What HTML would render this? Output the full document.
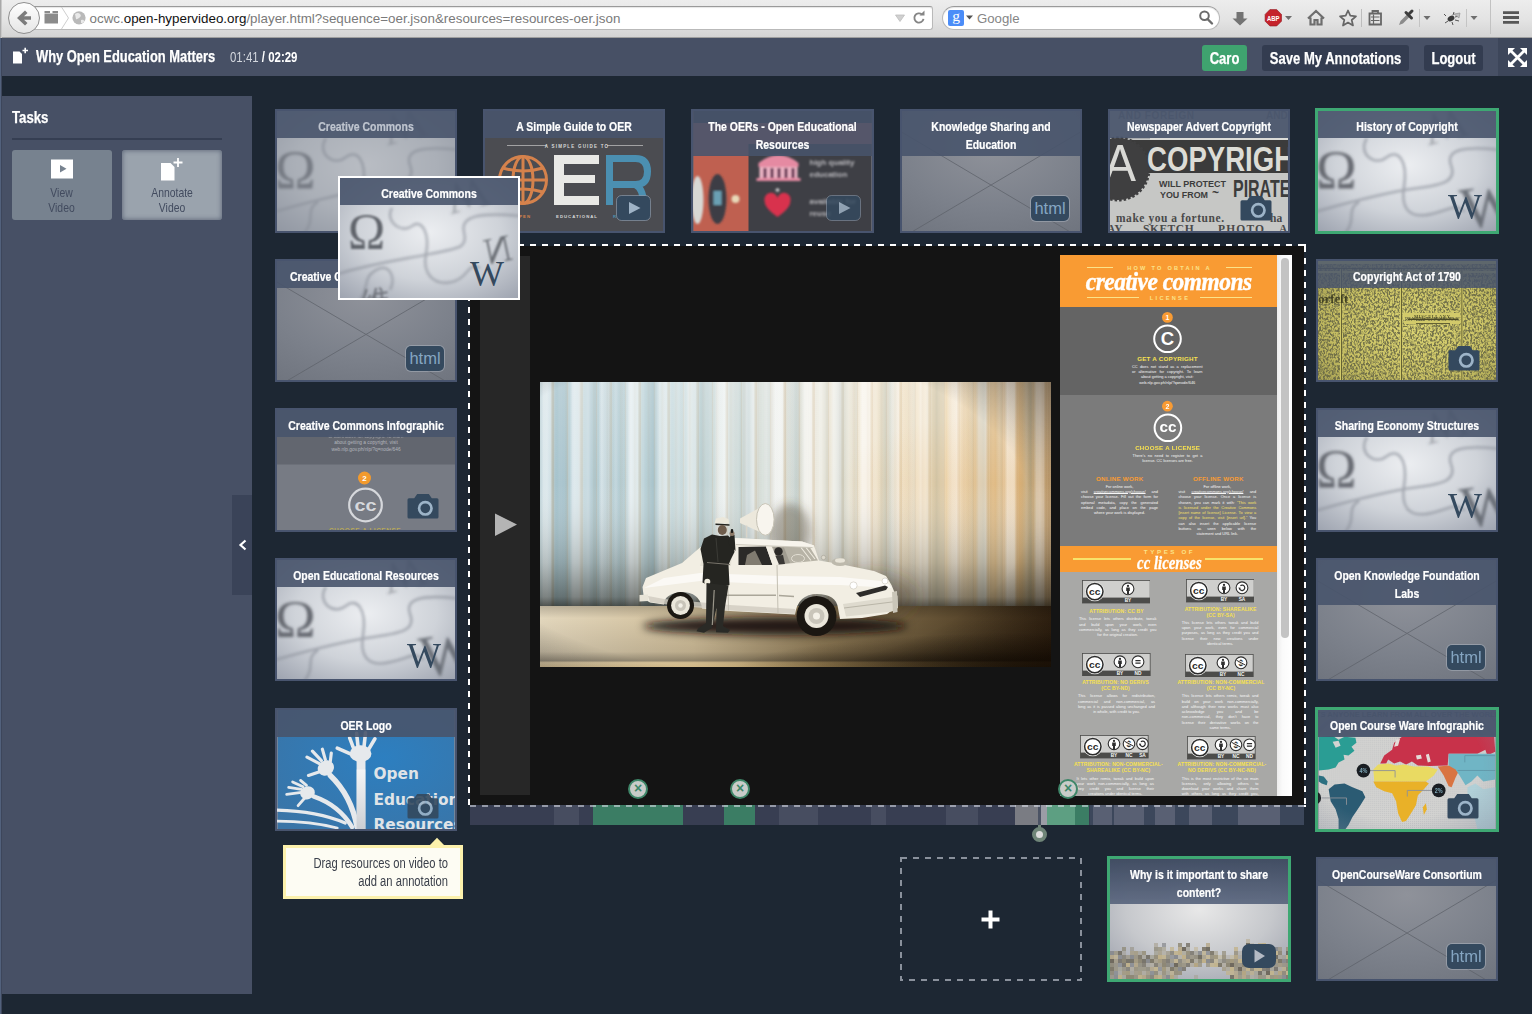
<!DOCTYPE html>
<html lang="en">
<head>
<meta charset="utf-8">
<title>Why Open Education Matters</title>
<style>
*{box-sizing:border-box;margin:0;padding:0}
html,body{width:1532px;height:1014px;overflow:hidden}
body{background:#1d2733;font-family:"Liberation Sans",sans-serif;position:relative;color:#fff}
.abs{position:absolute}
svg{display:block}
/* condensed text helper */
.cx{display:inline-block;transform:scaleX(.8);transform-origin:0 50%;white-space:nowrap}
.cc{transform-origin:50% 50%}
/* ---------- browser chrome ---------- */
#chrome{position:absolute;left:0;top:0;width:1532px;height:38px;background:linear-gradient(#ededed,#e3e3e3 55%,#d4d4d4);border-bottom:1px solid #9f9f9f}
#edge{position:absolute;left:0;top:0;width:2px;height:1014px;background:linear-gradient(90deg,#52617c 0 1px,#3d465b 1px 2px);z-index:50}
#edge:before{content:"";position:absolute;left:0;top:0;width:2px;height:38px;background:linear-gradient(90deg,#a9a9a9 0 1px,#c9c9c9 1px 2px)}
.field{position:absolute;top:6px;height:24px;background:#fff;border:1px solid #b9b9b9;border-top-color:#9a9a9a;box-shadow:inset 0 1px 1px rgba(0,0,0,.10)}
#url{left:22px;width:911px;border-radius:3px}
#search{left:942px;width:278px;border-radius:12px}
#back{position:absolute;left:8px;top:2px;width:32px;height:32px;border-radius:50%;background:linear-gradient(#fefefe,#e6e6e6);border:1px solid #8f8f8f}

.urltxt{position:absolute;left:89.5px;top:11px;font-size:13.38px;line-height:16px;color:#7a7a7a;white-space:nowrap}
.urltxt b{font-weight:normal;color:#111}
/* ---------- app header ---------- */
#hdr{position:absolute;left:0;top:38px;width:1532px;height:38px;background:#475065}
#hdr .title{-webkit-text-stroke:.25px #fff;position:absolute;left:36px;top:9px;font-size:16px;line-height:20px;font-weight:bold;color:#fff}
#hdr .time{position:absolute;left:230px;top:10px;font-size:14.3px;line-height:18px;color:#fff}
.btn{-webkit-text-stroke:.25px #fff;position:absolute;top:7px;height:26px;border-radius:3px;background:#333c50;color:#fff;font-weight:bold;font-size:16.5px;line-height:26px;text-align:center;white-space:nowrap}
.btn .cx{position:absolute;left:-50px;right:-50px;top:0;transform-origin:50% 50%;transform:scaleX(.79)}
/* ---------- sidebar ---------- */
#side{position:absolute;left:0;top:96px;width:252px;height:898px;background:#475065}
#side h2{-webkit-text-stroke:.25px #fff;position:absolute;left:12px;top:11px;font-size:16.5px;line-height:20px;color:#fff;font-weight:bold}
#side .rule{position:absolute;left:12px;top:42px;width:210px;height:2px;background:#353e52}
.task{position:absolute;top:54px;width:100px;height:70px;border-radius:3px;background:#77828f;color:#424b5f;font-size:13px;line-height:15px;text-align:center}
.task.on{background:#9aa3ad;box-shadow:inset 0 0 4px 1px rgba(70,80,100,.6)}
.task .lbl{position:absolute;left:0;top:35px;width:100%;text-align:center}
.task .lbl .cx{transform-origin:50% 50%;white-space:normal}
#handle{position:absolute;left:232px;top:495px;width:20px;height:100px;background:#3a4358;z-index:3}
/* ---------- thumbnails ---------- */
.th{position:absolute;width:182px;height:124px;border:2px solid #48546e;overflow:hidden;background:#868b96}
.th.sel{border:3px solid #3ea873;width:184px;height:126px;margin:-1px 0 0 -1px}
.th .img{position:absolute;left:0;top:0;right:0;bottom:0;overflow:hidden}
.th .img svg{width:100%;height:100%}
.th .tt{-webkit-text-stroke:.22px currentColor;position:absolute;left:0;top:0;width:124.07%;padding:7px 0 2px;background:rgba(72,84,108,.90);color:#fff;font-weight:bold;font-size:13px;line-height:18px;text-align:center;transform:scaleX(.806);transform-origin:0 0}
.th .ic{position:absolute;right:11px;top:84.5px;width:38px;height:25px;border-radius:5px;background:#34495e;box-shadow:0 0 0 1px rgba(200,210,220,.35);color:#86a6c2;font-size:16.5px;line-height:24px;text-align:center}

.th .wk{position:absolute;right:14px;top:81px;font-family:"Liberation Serif",serif;font-size:36px;line-height:30px;color:#34495e}

.ph{background:radial-gradient(ellipse at 50% 35%,#8f949e 0%,#7b818c 70%,#727884 100%)}
#tl i{position:absolute;top:0;height:20px;display:block}
.xb{position:absolute;width:20px;height:20px;border-radius:50%;background:#c9ccc9;border:2px solid #3f8769;color:#3f8769;font-weight:bold;font-size:14px;line-height:15.5px;text-align:center;z-index:8}
/* infographic text */
.tx{position:absolute;font-size:3.9px;line-height:5.25px;height:5.25px;color:#f6f6f6;white-space:nowrap;overflow:visible}
.tx u{text-decoration-thickness:.35px;text-underline-offset:.4px}
.hd{position:absolute;text-align:center;font-weight:bold;line-height:8px;height:8px;white-space:nowrap}
</style>
</head>
<body>
<!-- shared svg defs -->
<svg width="0" height="0" style="position:absolute">
  <defs>
    <radialGradient id="wg" cx=".5" cy=".45" r=".8"><stop offset="0" stop-color="#eceef1"/><stop offset=".5" stop-color="#cfd3d9"/><stop offset="1" stop-color="#969ca9"/></radialGradient>
    <filter id="bl" x="-20%" y="-20%" width="140%" height="140%"><feGaussianBlur stdDeviation="1.8"/></filter>
    <filter id="bl1" x="-20%" y="-20%" width="140%" height="140%"><feGaussianBlur stdDeviation=".8"/></filter>
    <filter id="bl05" x="-5%" y="-5%" width="110%" height="110%"><feGaussianBlur stdDeviation=".7"/></filter>
    <filter id="bl3" x="-20%" y="-20%" width="140%" height="140%"><feGaussianBlur stdDeviation="3"/></filter>
  </defs>
</svg>
<div id="edge"></div>
<!-- ================= BROWSER CHROME ================= -->
<div id="chrome">
  <div class="field" id="url"></div>
  <div id="back"></div>
  <div class="urltxt">ocwc.<b>open-hypervideo.org</b>/player.html?sequence=oer.json&amp;resources=resources-oer.json</div>
  <div class="field" id="search"></div>
  <div class="abs" style="left:977px;top:10.5px;font-size:13.2px;line-height:16px;color:#858585">Google</div>
  <svg class="abs" style="left:0;top:0" width="1532" height="38" viewBox="0 0 1532 38">
    <!-- back arrow -->
    <path d="M17 18L25 10.500L27.500 13L24 16.200H31V19.800H24L27.500 23L25 25.500z" fill="#7c7c7c"/>
    <!-- tab-groups icon -->
    <path d="M44.500 11h5.500v2h2.500v-2h5.500v2.500h-13.500zM44.500 14h13.500v9.500h-13.500z" fill="#8b8b8b"/>
    <path d="M61.500 7L68.500 18L61.500 29" fill="none" stroke="#cfcfcf" stroke-width="1"/>
    <!-- globe -->
    <circle cx="79" cy="17.800" r="6.600" fill="#b9b9b9"/><path d="M75 14q3-2 5 0t-1 4t-3 1zM81 20q3-1 3 1t-3 2z" fill="#e9e9e9"/>
    <!-- url dropdown + reload -->
    <path d="M895.500 15h9l-4.500 6.500z" fill="#d0d0d0" stroke="#bdbdbd" stroke-width=".8"/>
    <path d="M922 14.500a4.600 4.600 0 1 0 1.500 4.300" fill="none" stroke="#858585" stroke-width="1.900"/><path d="M919.500 15.500h5v-5z" fill="#858585"/>
    <!-- google icon -->
    <rect x="948" y="10" width="16" height="16" rx="2" fill="#4b8df8"/><text x="956" y="21" font-size="15.500" fill="#fff" text-anchor="middle" font-family="Liberation Serif,serif">g</text>
    <path d="M966 15.500h7l-3.500 4z" fill="#555"/>
    <!-- magnifier -->
    <circle cx="1204.500" cy="15.800" r="4.300" fill="none" stroke="#6b6b6b" stroke-width="2"/><path d="M1207.500 19L1212 23.500" stroke="#6b6b6b" stroke-width="2.400" stroke-linecap="round"/>
    <!-- download -->
    <path d="M1236.500 12h7v6.500h4l-7.500 7l-7.500-7h4z" fill="#737373"/>
    <!-- ABP -->
    <path d="M1269.900 9.600h6.800l4.800 4.800v6.800l-4.800 4.800h-6.800l-4.800-4.800v-6.800z" fill="#c5232b" stroke="#8e1a20" stroke-width=".6"/><text x="1273.300" y="20.600" font-size="7" font-weight="bold" fill="#fff" text-anchor="middle" font-family="Liberation Sans,sans-serif" textLength="12.500" lengthAdjust="spacingAndGlyphs">ABP</text>
    <path d="M1285 16h7l-3.500 4z" fill="#6e6e6e"/>
    <!-- home -->
    <path d="M1308 18.500L1316 11L1324 18.500M1310.500 17.500V24.500H1314.500V20H1317.500V24.500H1321.500V17.500" fill="none" stroke="#6e6e6e" stroke-width="2.200"/>
    <!-- star -->
    <path d="M1348 10.500L1350.300 15.700L1356 16.300L1351.700 20L1353 25.500L1348 22.600L1343 25.500L1344.300 20L1340 16.300L1345.700 15.700z" fill="none" stroke="#666" stroke-width="1.700" stroke-linejoin="round"/>
    <path d="M1361.500 9V27" stroke="#bdbdbd"/>
    <!-- list/clipboard -->
    <path d="M1369.500 13.500h11.500v11h-11.500zM1372.500 13.500v-2.500h5.500v2.500" fill="none" stroke="#666" stroke-width="1.800"/><path d="M1371 17h8.500M1371 20.500h8.500M1373.500 14.500v9.500" stroke="#666" stroke-width="1.200"/>
    <!-- eyedropper -->
    <path d="M1399 25L1400.500 21L1407 14.500L1409.500 17L1403 23.500z" fill="#8b8b8b"/><path d="M1406 12.500L1411.500 18M1408.500 14.500L1412 11" stroke="#3c3c3c" stroke-width="3" stroke-linecap="round"/>
    <path d="M1419.500 9V27" stroke="#c4c4c4"/><path d="M1423.500 16h7l-3.500 4z" fill="#6e6e6e"/>
    <!-- bug -->
    <ellipse cx="1451" cy="18.500" rx="3.600" ry="2.600" fill="#3a3a3a" transform="rotate(-30 1451 18.500)"/><path d="M1446 16l-2-2M1448 21l-3 2M1453 15l1-3M1455 17l4-1M1455 20l4 1M1452 22l1 3" stroke="#555" stroke-width="1"/><path d="M1454 14l6-1l-1 5z" fill="#bdbdbd" stroke="#8a8a8a" stroke-width=".6"/>
    <path d="M1466.500 9V27" stroke="#c4c4c4"/><path d="M1470.500 16h7l-3.500 4z" fill="#6e6e6e"/>
    <path d="M1490.500 0V34" stroke="#c2c2c2"/>
    <!-- hamburger -->
    <path d="M1503 12.700h16M1503 17.500h16M1503 22.300h16" stroke="#575757" stroke-width="2.800"/>
  </svg>
</div>
<!-- ================= APP HEADER ================= -->
<div id="hdr">
  <svg class="abs" style="left:12px;top:9px" width="18" height="18" viewBox="0 0 18 18"><path d="M1 4.500h6.500l2.500 2.500v9.500h-9z" fill="#fff"/><path d="M10.500 3.500h5.500M13.200 .8v5.500" stroke="#fff" stroke-width="1.600"/></svg>
  <div class="abs" style="left:1498px;top:0;width:34px;height:38px;background:#3d465a"></div><svg class="abs" style="left:1507.5px;top:10px" width="19" height="19" viewBox="0 0 19 19"><path d="M3 3L16 16M16 3L3 16" stroke="#fff" stroke-width="2.800"/><g fill="#fff"><path d="M0 0h7L0 7z"/><path d="M19 0v7L12 0z"/><path d="M0 19v-7L7 19z"/><path d="M19 19h-7L19 12z"/></g></svg>
  <div class="title"><span class="cx" style="transform:scaleX(.806)">Why Open Education Matters</span></div>
  <div class="time"><span class="cx"><span style="color:#d3d7de">01:41</span> <b>/ 02:29</b></span></div>
  <div class="btn" style="left:1202px;width:45px;background:#3fa36f"><span class="cx">Caro</span></div>
  <div class="btn" style="left:1262px;width:147px"><span class="cx">Save My Annotations</span></div>
  <div class="btn" style="left:1424px;width:59px"><span class="cx">Logout</span></div>
</div>
<!-- ================= SIDEBAR ================= -->
<div id="side">
  <h2><span class="cx">Tasks</span></h2>
  <div class="rule"></div>
  <div class="task" style="left:12px"><svg class="abs" style="left:39px;top:9px" width="22" height="20"><path d="M0 .5h22v19h-22zM9 6v7.500l6.500-3.750z" fill="#fff" fill-rule="evenodd"/></svg><div class="lbl"><span class="cx">View<br>Video</span></div></div>
  <div class="task on" style="left:122px"><svg class="abs" style="left:39px;top:7px" width="24" height="24" viewBox="0 0 24 24"><path d="M0 6h9.500l4 4v13.500h-13.500z" fill="#fff"/><path d="M12.500 5.500h9M17 1v9" stroke="#fff" stroke-width="1.800"/></svg><div class="lbl"><span class="cx">Annotate<br>Video</span></div></div>
</div>
<div id="handle"><svg class="abs" style="left:6px;top:44px" width="9" height="12"><path d="M7.500 1.500L2.500 6L7.500 10.500" fill="none" stroke="#fff" stroke-width="2.200"/></svg></div>
<svg width="0" height="0" style="position:absolute"><defs>
  <radialGradient id="pg" cx=".5" cy=".3" r=".85"><stop offset="0" stop-color="#8f929a"/><stop offset=".6" stop-color="#7c818b"/><stop offset="1" stop-color="#70757f"/></radialGradient>
  <radialGradient id="cg" cx=".5" cy=".42" r=".75"><stop offset="0" stop-color="#e8e8e8"/><stop offset=".55" stop-color="#c6c8cc"/><stop offset="1" stop-color="#9a9eaa"/></radialGradient>
</defs></svg>
<!-- ================= THUMBNAILS ================= -->
<div id="thumbs">
  <!-- row 1 -->
  <div class="th" style="left:275px;top:109px"><div class="img" style="opacity:.5"><svg viewBox="0 0 182 124" preserveAspectRatio="none"><rect width="182" height="124" fill="url(#wg)"/><g filter="url(#bl)" fill="none" stroke="#8a8f99" stroke-width="2.400" opacity=".7"><path d="M50 28C40 44 58 58 70 48S92 52 88 78S96 112 118 106S140 96 150 104"/><path d="M-2 104C40 92 70 84 100 80S142 72 136 56S150 36 184 40"/><path d="M28 126C40 112 28 102 42 94"/></g><g filter="url(#bl)" fill="#5f636b" font-family="Liberation Serif,serif"><text x="-2" y="80" font-size="56" opacity=".95">Ω</text><text x="146" y="120" font-size="62" opacity=".85" transform="rotate(-8 165 100)">W</text><text x="96" y="2" font-size="46" opacity=".45" transform="rotate(165 122 2)">W</text></g></svg></div><div class="tt" style="color:#bfc5cf">Creative Commons</div></div>

  <div class="th" style="left:483px;top:109px"><div class="img">
    <svg viewBox="0 0 178 120"><rect width="178" height="120" fill="#4b4c51"/>
      <g stroke="#b9b9b9" stroke-width=".8"><line x1="22" y1="34.5" x2="62" y2="34.5"/><line x1="122" y1="34.5" x2="158" y2="34.5"/></g>
      <text x="92" y="36.5" font-size="4.5" font-weight="bold" fill="#d8d8d8" text-anchor="middle" letter-spacing="1.2" font-family="Liberation Sans,sans-serif">A SIMPLE GUIDE TO</text>
      <g fill="none" stroke="#d5824c" stroke-width="3"><circle cx="38" cy="69" r="23.5"/><ellipse cx="38" cy="69" rx="10" ry="23.5"/><line x1="38" y1="45" x2="38" y2="93"/><line x1="14" y1="69" x2="62" y2="69"/><path d="M18 57Q38 63 58 57M18 81Q38 75 58 81"/></g>
      <path d="M69 44h45v9H79v11h31v8H79v13h35v9H69z" fill="#e9e9e6"/>
      <path d="M124.500 94V47.500h26q12 0 12 13t-12 13h-26M150 73.500q8 3 9 20.500" fill="none" stroke="#4b8fb1" stroke-width="7"/>
      <text x="38" y="106.500" font-size="4.300" font-weight="bold" fill="#d5824c" text-anchor="middle" letter-spacing="1" font-family="Liberation Sans,sans-serif">OPEN</text>
      <text x="92" y="106.500" font-size="4.300" font-weight="bold" fill="#d8d8d8" text-anchor="middle" letter-spacing="1" font-family="Liberation Sans,sans-serif">EDUCATIONAL</text>
      <text x="146" y="106.500" font-size="4.300" font-weight="bold" fill="#4b8fb1" text-anchor="middle" letter-spacing="1" font-family="Liberation Sans,sans-serif">RESOURCES</text>
    </svg></div><div class="tt">A Simple Guide to OER</div><div class="abs" style="left:131px;top:84px"><svg viewBox="0 0 35 27" width="35" height="27"><rect x=".5" y=".5" width="34" height="25" rx="5" fill="#34495e" stroke="rgba(200,210,225,.4)"/><path d="M13 7L24.500 13L13 19z" fill="#9fb3c6"/></svg></div></div>

  <div class="th" style="left:691px;top:109px;width:183px"><div class="img">
    <svg viewBox="0 0 178 120"><rect width="178" height="120" fill="#3e3f45"/><rect width="55" height="120" fill="#bf6050"/><rect y="12" width="178" height="32" fill="#c86a5c"/><rect width="178" height="12" fill="#30343c"/><rect x="55" y="33" width="123" height="12" fill="#32343a"/>
      <g filter="url(#bl1)"><ellipse cx="4" cy="89" rx="6" ry="24" fill="#d8d8d4"/><ellipse cx="24" cy="88" rx="9" ry="25" fill="#3d3d45"/><rect x="20" y="80" width="8" height="14" fill="#6aa0b4"/><circle cx="42" cy="88" r="4" fill="#e8d8b8"/>
      <path d="M65 52q20-16 40 0v4H65z" fill="#e58aa2"/><rect x="66" y="56" width="38" height="12" fill="#f0b8c8"/><g fill="#5a2848"><rect x="70" y="57" width="3" height="10"/><rect x="77" y="57" width="3" height="10"/><rect x="84" y="57" width="3" height="10"/><rect x="91" y="57" width="3" height="10"/><rect x="98" y="57" width="3" height="10"/></g><rect x="63" y="67" width="44" height="3" fill="#e58aa2"/>
      <path d="M82 79h4M84 77v4" stroke="#ddd" stroke-width="1.300"/>
      <path d="M84 106q-13-9-13-16a6.500 6.500 0 0 1 13-3a6.500 6.500 0 0 1 13 3q0 7-13 16z" fill="#d8334e"/></g>
      <g filter="url(#bl1)" fill="#b9b9bd" font-size="8" font-family="Liberation Sans,sans-serif" font-weight="bold"><text x="116" y="54">high quality</text><text x="116" y="66">education</text><text x="116" y="93">available for</text><text x="116" y="105">reuse</text></g>
      
    </svg></div><div class="tt">The OERs - Open Educational<br>Resources</div><div class="abs" style="left:133px;top:84px;opacity:.85"><svg viewBox="0 0 35 27" width="35" height="27"><rect x=".5" y=".5" width="34" height="25" rx="5" fill="#34495e" stroke="rgba(200,210,225,.4)"/><path d="M13 7L24.500 13L13 19z" fill="#9fb3c6"/></svg></div></div>

  <div class="th" style="left:900px;top:109px"><div class="img"><svg viewBox="0 0 182 124" preserveAspectRatio="none"><defs></defs><rect width="182" height="124" fill="url(#pg)"/><g stroke="#5f636b" stroke-width="1" opacity=".8"><line x1="0" y1="22" x2="182" y2="131"/><line x1="182" y1="22" x2="0" y2="131"/></g></svg></div><div class="tt">Knowledge Sharing and<br>Education</div><div class="ic">html</div></div>

  <div class="th" style="left:1108px;top:109px"><div class="img">
    <svg viewBox="0 0 178 120"><rect width="178" height="120" fill="#c6c7c5"/>
      <rect y="0" width="178" height="28" fill="#a9acae"/>
      <g font-family="Liberation Sans,sans-serif" font-weight="bold" fill="#6c7078" font-size="10"><text x="8" y="8" textLength="76">AND FOREIGN</text><text x="156" y="8">AND</text></g>
      <rect y="29" width="178" height="33" fill="#3b3b3b"/>
      <circle cx="8" cy="58" r="31" fill="#3f3f40" stroke="#3f3f40" stroke-width="3" stroke-dasharray="2.500 2"/>
      <rect x="40" y="27" width="138" height="2" fill="#dcdcd8"/>
      <text x="-6" y="70" font-size="52" fill="#d9d9d5" font-family="Liberation Sans,sans-serif" textLength="32" lengthAdjust="spacingAndGlyphs">A</text>
      <text x="37" y="59.500" font-size="35" font-weight="bold" fill="#dcdcd6" font-family="Liberation Sans,sans-serif" textLength="164" lengthAdjust="spacingAndGlyphs">COPYRIGHT</text>
      <g font-family="Liberation Sans,sans-serif" font-weight="bold" fill="#3c3c3c"><text x="49" y="76" font-size="9.500" textLength="67" lengthAdjust="spacingAndGlyphs">WILL PROTECT</text><text x="50" y="87" font-size="9.500" textLength="48" lengthAdjust="spacingAndGlyphs">YOU FROM</text><text x="102" y="86" font-size="12">~</text><text x="123" y="86" font-size="23" textLength="68" lengthAdjust="spacingAndGlyphs">PIRATES</text></g>
      <g font-family="Liberation Serif,serif" font-weight="bold" fill="#4a4a4a"><text x="6" y="111" font-size="11.500" textLength="108">make you a fortune.</text><text x="160" y="111" font-size="11.500">ha</text><text x="-3" y="122" font-size="11.500">AY.</text><text x="33" y="122" font-size="11.500" textLength="54">SKETCH.</text><text x="108" y="122" font-size="11.500" textLength="50">PHOTO.</text><text x="169" y="122" font-size="11.500">A</text></g>
    </svg></div><div class="tt">Newspaper Advert Copyright</div><div class="abs" style="left:130px;top:85px"><svg viewBox="0 0 32 25" width="32" height="25"><path d="M2 4.200h5.200l3-4.200h11.600l3 4.200h5.200a1.500 1.500 0 0 1 1.500 1.500v17.300a1.500 1.500 0 0 1-1.500 1.500h-28a1.500 1.500 0 0 1-1.500-1.500v-17.300a1.500 1.500 0 0 1 1.500-1.500z" fill="#34495e"/><circle cx="18.300" cy="14.300" r="6.200" fill="none" stroke="#9db4c8" stroke-width="2.700"/></svg></div></div>

  <div class="th sel" style="left:1316px;top:109px"><div class="img"><svg viewBox="0 0 182 124" preserveAspectRatio="none"><rect width="182" height="124" fill="url(#wg)"/><g filter="url(#bl)" fill="none" stroke="#8a8f99" stroke-width="2.400" opacity=".7"><path d="M50 28C40 44 58 58 70 48S92 52 88 78S96 112 118 106S140 96 150 104"/><path d="M-2 104C40 92 70 84 100 80S142 72 136 56S150 36 184 40"/><path d="M28 126C40 112 28 102 42 94"/></g><g filter="url(#bl)" fill="#5f636b" font-family="Liberation Serif,serif"><text x="-2" y="80" font-size="56" opacity=".95">Ω</text><text x="146" y="120" font-size="62" opacity=".85" transform="rotate(-8 165 100)">W</text><text x="96" y="2" font-size="46" opacity=".45" transform="rotate(165 122 2)">W</text></g></svg></div><div class="tt">History of Copyright</div><div class="wk">W</div></div>

  <!-- left column -->
  <div class="th" style="left:275px;top:259px;height:123px"><div class="img"><svg viewBox="0 0 182 124" preserveAspectRatio="none"><defs></defs><rect width="182" height="124" fill="url(#pg)"/><g stroke="#5f636b" stroke-width="1" opacity=".8"><line x1="0" y1="22" x2="182" y2="131"/><line x1="182" y1="22" x2="0" y2="131"/></g></svg></div><div class="tt">Creative Commons Homepage</div><div class="ic">html</div></div>

  <div class="th" style="left:275px;top:408px"><div class="img">
    <svg viewBox="0 0 178 120"><rect width="178" height="120" fill="#777b84"/><rect width="178" height="54.500" fill="#62666f"/>
      <g font-family="Liberation Sans,sans-serif" fill="#b4b7be" font-size="4.800" text-anchor="middle"><text x="89" y="28" opacity=".7">or alternative for copyright. To learn</text><text x="89" y="34.300">about getting a copyright, visit</text><text x="89" y="40.600">web.nlp.gov.ph/nlp/?q=node/646</text></g>
      <circle cx="87.500" cy="68" r="6.500" fill="#f39a2c"/><text x="87.500" y="71" font-size="8" font-weight="bold" fill="#fff" text-anchor="middle" font-family="Liberation Sans,sans-serif">2</text>
      <circle cx="88.500" cy="95" r="16.300" fill="none" stroke="#d6d8dc" stroke-width="2.200"/><text x="88.500" y="101" font-size="16" font-weight="bold" fill="#d6d8dc" text-anchor="middle" font-family="Liberation Sans,sans-serif" textLength="22" lengthAdjust="spacingAndGlyphs">cc</text>
      <text x="88" y="123" font-size="6.500" font-weight="bold" fill="#b8a857" text-anchor="middle" font-family="Liberation Sans,sans-serif" letter-spacing=".5">CHOOSE A LICENSE</text>
    </svg></div><div class="tt">Creative Commons Infographic</div><div class="abs" style="left:130px;top:84px"><svg viewBox="0 0 32 25" width="32" height="25"><path d="M2 4.200h5.200l3-4.200h11.600l3 4.200h5.200a1.500 1.500 0 0 1 1.500 1.500v17.300a1.500 1.500 0 0 1-1.500 1.500h-28a1.500 1.500 0 0 1-1.500-1.500v-17.300a1.500 1.500 0 0 1 1.500-1.500z" fill="#34495e"/><circle cx="18.300" cy="14.300" r="6.200" fill="none" stroke="#9db4c8" stroke-width="2.700"/></svg></div></div>

  <div class="th" style="left:275px;top:558px;height:123px"><div class="img"><svg viewBox="0 0 182 124" preserveAspectRatio="none"><rect width="182" height="124" fill="url(#wg)"/><g filter="url(#bl)" fill="none" stroke="#8a8f99" stroke-width="2.400" opacity=".7"><path d="M50 28C40 44 58 58 70 48S92 52 88 78S96 112 118 106S140 96 150 104"/><path d="M-2 104C40 92 70 84 100 80S142 72 136 56S150 36 184 40"/><path d="M28 126C40 112 28 102 42 94"/></g><g filter="url(#bl)" fill="#5f636b" font-family="Liberation Serif,serif"><text x="-2" y="80" font-size="56" opacity=".95">Ω</text><text x="146" y="120" font-size="62" opacity=".85" transform="rotate(-8 165 100)">W</text><text x="96" y="2" font-size="46" opacity=".45" transform="rotate(165 122 2)">W</text></g></svg></div><div class="tt">Open Educational Resources</div><div class="wk">W</div></div>

  <div class="th" style="left:275px;top:708px;height:123px"><div class="img">
    <svg viewBox="0 0 178 120"><defs><radialGradient id="og" cx=".6" cy=".4" r=".8"><stop offset="0" stop-color="#2d7fc0"/><stop offset="1" stop-color="#3a74a6"/></radialGradient><linearGradient id="otr" x1="0" x2="0" y1="0" y2="1"><stop offset="0" stop-color="#fff" stop-opacity=".5"/><stop offset="1" stop-color="#b8bcc2" stop-opacity=".6"/></linearGradient></defs><rect width="178" height="120" fill="url(#og)"/>
      <g fill="none" stroke="#e6e9ec" stroke-linecap="round" stroke-linejoin="round">
        <path d="M84 122V48" stroke-width="9"/>
        <path d="M80 118Q74 86 53 66" stroke-width="5.500"/><path d="M75 118Q62 96 36 87" stroke-width="4.500"/>
        <path d="M68 114Q40 102 -2 101" stroke-width="3.200"/><path d="M60 119Q34 112 -2 112" stroke-width="2.800"/>
        <g stroke-width="3.600"><path d="M77 40L72.500 28M81 37L79.500 23.500M87 37L88.500 23M91.500 40L98 29M75 45L60 38.500"/></g>
        <g stroke-width="3.200"><path d="M42 54L29.500 47.500M44 51L35 41.500M48 50L45 39.500M53 52L54 43.500M43 62L31 66"/></g>
        <g stroke-width="2.800"><path d="M24 83L9 85M24 80L11 78M25.500 77.500L15 72.500M29 76L23 71M27 89L20.500 96.500"/></g>
      </g>
      <g fill="#e6e9ec"><ellipse cx="83.500" cy="44" rx="11" ry="8.500"/><ellipse cx="48.500" cy="58.500" rx="8.500" ry="7.500" transform="rotate(-35 48.500 58.500)"/><ellipse cx="30" cy="83.500" rx="7.500" ry="6.500" transform="rotate(-20 30 83.500)"/></g>
      <rect x="79.500" y="60" width="9" height="60" fill="url(#otr)"/>
      <g font-family="DejaVu Sans,sans-serif" font-weight="bold" fill="#dfe3e7" font-size="15.500"><text x="96.500" y="70">Open</text><text x="96.500" y="95.500">Education</text><text x="96.500" y="121">Resources</text></g>
    </svg></div><div class="tt">OER Logo</div><div class="abs" style="left:130px;top:83.5px;opacity:.9"><svg viewBox="0 0 32 25" width="32" height="25"><path d="M2 4.200h5.200l3-4.200h11.600l3 4.200h5.200a1.500 1.500 0 0 1 1.500 1.500v17.300a1.500 1.500 0 0 1-1.500 1.500h-28a1.500 1.500 0 0 1-1.500-1.500v-17.300a1.500 1.500 0 0 1 1.500-1.500z" fill="#34495e"/><circle cx="18.300" cy="14.300" r="6.200" fill="none" stroke="#9db4c8" stroke-width="2.700"/></svg></div></div>

  <!-- right column -->
  <div class="th" style="left:1316px;top:259px;height:123px"><div class="img">
    <svg viewBox="0 0 178 119" preserveAspectRatio="none"><defs>
      <filter id="np" x="0" y="0" width="100%" height="100%"><feTurbulence type="fractalNoise" baseFrequency=".55 .42" numOctaves="2" seed="7" result="n"/><feColorMatrix in="n" type="matrix" values="0 0 0 0 .13  0 0 0 0 .13  0 0 0 0 .06  -3.200 -3.200 0 0 3.600"/></filter>
      <radialGradient id="ny" cx=".55" cy=".55" r=".7"><stop offset="0" stop-color="#dcd573"/><stop offset=".6" stop-color="#c9c164"/><stop offset="1" stop-color="#a9a354"/></radialGradient></defs>
      <rect width="178" height="119" fill="url(#ny)"/>
      <rect width="178" height="119" filter="url(#np)" opacity=".85"/>
      <g fill="#d2ca6a"><rect x="22" y="8" width="2.500" height="111"/><rect x="82" y="8" width="2.500" height="111"/><rect x="142.500" y="8" width="2.500" height="111"/><rect x="0" y="0" width="178" height="3"/><rect x="0" y="10" width="178" height="2"/><rect x="86" y="52" width="56" height="4"/><rect x="86" y="60" width="56" height="3"/></g>
      <g fill="#4a4926"><rect x="23" y="8" width=".8" height="111"/><rect x="83" y="8" width=".8" height="111"/><rect x="143.500" y="8" width=".8" height="111"/><rect x="0" y="7" width="178" height=".8"/><rect x="90" y="57.500" width="50" height="1.600"/><rect x="98" y="62" width="34" height=".8"/></g>
      <g font-family="Liberation Serif,serif" font-weight="bold" fill="#33331a" opacity=".8"><text x="0" y="42" font-size="13">orfeſt</text><text x="96" y="56.500" font-size="4.500" letter-spacing=".6">MISCELLANY.</text></g>
    </svg>
    </div><div class="tt" style="background:rgba(72,84,108,.84)">Copyright Act of 1790</div><div class="abs" style="left:130px;top:85px"><svg viewBox="0 0 32 25" width="32" height="25"><path d="M2 4.200h5.200l3-4.200h11.600l3 4.200h5.200a1.500 1.500 0 0 1 1.500 1.500v17.300a1.500 1.500 0 0 1-1.500 1.500h-28a1.500 1.500 0 0 1-1.500-1.500v-17.300a1.500 1.500 0 0 1 1.500-1.500z" fill="#34495e"/><circle cx="18.300" cy="14.300" r="6.200" fill="none" stroke="#9db4c8" stroke-width="2.700"/></svg></div></div>

  <div class="th" style="left:1316px;top:408px"><div class="img"><svg viewBox="0 0 182 124" preserveAspectRatio="none"><rect width="182" height="124" fill="url(#wg)"/><g filter="url(#bl)" fill="none" stroke="#8a8f99" stroke-width="2.400" opacity=".7"><path d="M50 28C40 44 58 58 70 48S92 52 88 78S96 112 118 106S140 96 150 104"/><path d="M-2 104C40 92 70 84 100 80S142 72 136 56S150 36 184 40"/><path d="M28 126C40 112 28 102 42 94"/></g><g filter="url(#bl)" fill="#5f636b" font-family="Liberation Serif,serif"><text x="-2" y="80" font-size="56" opacity=".95">Ω</text><text x="146" y="120" font-size="62" opacity=".85" transform="rotate(-8 165 100)">W</text><text x="96" y="2" font-size="46" opacity=".45" transform="rotate(165 122 2)">W</text></g></svg></div><div class="tt">Sharing Economy Structures</div><div class="wk">W</div></div>

  <div class="th" style="left:1316px;top:558px;height:123px"><div class="img"><svg viewBox="0 0 182 124" preserveAspectRatio="none"><defs></defs><rect width="182" height="124" fill="url(#pg)"/><g stroke="#5f636b" stroke-width="1" opacity=".8"><line x1="0" y1="22" x2="182" y2="131"/><line x1="182" y1="22" x2="0" y2="131"/></g></svg></div><div class="tt">Open Knowledge Foundation<br>Labs</div><div class="ic">html</div></div>

  <div class="th sel" style="left:1316px;top:708px;height:125px"><div class="img">
    <svg viewBox="0 0 178 120"><defs><pattern id="dots" width="2" height="2" patternUnits="userSpaceOnUse"><rect width="2" height="2" fill="#d3d3d1"/><rect width="1" height="1" fill="#c2c3c4"/></pattern><radialGradient id="mv" cx=".45" cy=".45" r=".8"><stop offset=".6" stop-color="#8a90a0" stop-opacity="0"/><stop offset="1" stop-color="#8a90a0" stop-opacity=".5"/></radialGradient></defs>
      <rect width="178" height="120" fill="url(#dots)"/>
      <rect width="178" height="26" fill="#9a9ca4"/>
      <text x="-3" y="7.500" font-size="6.800" font-weight="bold" fill="#4a5268" font-family="Liberation Sans,sans-serif" textLength="186" lengthAdjust="spacingAndGlyphs">TS ANYONE LEARN FROM ALL OVER THE WORLD</text>
      <path d="M0 27L14 26L20 30L26 27L37 28L38 33L33 37L36 41L30 46L25 45L26 50L20 53L17 58L10 60L0 61z" fill="#2a9d94"/><path d="M14 32L20 31L22 36L17 38z" fill="#d3d3d1"/>
      <path d="M0 66L5 67L9 72L8 76L3 74L0 72z" fill="#2b6f80"/>
      <path d="M10 80L16 75L26 74L34 78L44 82L47 88L42 96L38 102L34 108L30 116L27 120H20L20 110L17 100L12 92z" fill="#2b5b73"/>
      <path d="M62 54L66 46L74 40L76 33L84 27L96 26.500L120 26.500L150 27L177 27L178 42L170 46L168 40L160 44L150 44L131 44L130 56L112 56.500L100 56L94 52L88 55L82 52L76 54L70 50L68 54z" fill="#c8324a"/>
      <path d="M78 30L82 29L80 36L76 37zM98 46L103 45L104 49L99 50zM108 45L111 44L113 52L110 53z" fill="#e4dcd8"/>
      <path d="M55 60L60 55L70 54L78 56L86 55L96 57L110 57L120 60L116 66L108 72L56 72z" fill="#e9da62"/>
      <path d="M55 72L108 72L111 74L106 80L100 86L98 96L92 106L88 112L84 113L80 104L78 92L74 84L66 82L58 78z" fill="#e9b128"/>
      <path d="M105 98L108 94L109 100L106 106z" fill="#e9b128"/>
      <path d="M120 57L132 56L142 60L138 68L134 78L131 77L126 66z" fill="#d97442"/>
      <path d="M131 44L168 44L178 44V70L166 72L160 66L154 72L148 76L142 66L138 60L131 56z" fill="#70b5c5"/>
      <path d="M150 78L158 74L166 80L178 78V120H160L156 104L150 92z" fill="#a9d0d9" opacity=".8"/>
      <g fill="none" stroke="#8d9196" stroke-width=".9"><path d="M52 61.100H77V68M114 81.100H89.300V87.300M3 88.700H28V95.600"/><path d="M147.300 52.800V46H178M140 61H178" stroke="#5f98a8"/></g>
      <g fill="#191d22"><circle cx="45.100" cy="61.100" r="6.900"/><circle cx="121" cy="81.100" r="6.900"/><circle cx="-4.500" cy="88.700" r="6.900"/></g>
      <g font-family="Liberation Sans,sans-serif" font-size="7" font-weight="bold" fill="#7fa8b8" text-anchor="middle"><text x="45.100" y="63.600" textLength="8" lengthAdjust="spacingAndGlyphs">4%</text><text x="121" y="83.600" textLength="8" lengthAdjust="spacingAndGlyphs">2%</text></g>
      <rect width="178" height="120" fill="url(#mv)"/>
    </svg></div><div class="tt" style="background:rgba(72,84,108,.93)">Open Course Ware Infographic</div><div class="abs" style="left:129px;top:84px"><svg viewBox="0 0 32 25" width="32" height="25"><path d="M2 4.200h5.200l3-4.200h11.600l3 4.200h5.200a1.500 1.500 0 0 1 1.500 1.500v17.300a1.500 1.500 0 0 1-1.500 1.500h-28a1.500 1.500 0 0 1-1.500-1.500v-17.300a1.500 1.500 0 0 1 1.500-1.500z" fill="#34495e"/><circle cx="18.300" cy="14.300" r="6.200" fill="none" stroke="#9db4c8" stroke-width="2.700"/></svg></div></div>

  <!-- bottom row -->
  <div class="th sel" style="left:1108px;top:857px"><div class="img">
    <svg viewBox="0 0 178 120"><rect width="178" height="120" fill="url(#cg)"/>
      <g filter="url(#bl05)"><rect x="0" y="92" width="4" height="4" fill="#8a8c90" opacity="1"/><rect x="0" y="96" width="4" height="4" fill="#b4a684" opacity="0.85"/><rect x="0" y="100" width="4" height="4" fill="#6f6a5e" opacity="1"/><rect x="0" y="104" width="4" height="4" fill="#8e8876" opacity="0.85"/><rect x="0" y="108" width="4" height="4" fill="#7f7a6c" opacity="1"/><rect x="0" y="112" width="4" height="4" fill="#8e8876" opacity="0.85"/><rect x="0" y="116" width="4" height="4" fill="#9c9684" opacity="0.75"/><rect x="4" y="92" width="4" height="4" fill="#9c9684" opacity="0.85"/><rect x="4" y="96" width="4" height="4" fill="#c2b48e" opacity="0.75"/><rect x="4" y="100" width="4" height="4" fill="#a39a80" opacity="0.75"/><rect x="4" y="104" width="4" height="4" fill="#97917f" opacity="0.75"/><rect x="4" y="108" width="4" height="4" fill="#9c9684" opacity="0.85"/><rect x="4" y="112" width="4" height="4" fill="#8a8c90" opacity="0.75"/><rect x="4" y="116" width="4" height="4" fill="#8a8c90" opacity="0.95"/><rect x="8" y="92" width="4" height="4" fill="#6f6a5e" opacity="0.85"/><rect x="8" y="96" width="4" height="4" fill="#8a8c90" opacity="0.95"/><rect x="8" y="100" width="4" height="4" fill="#6f6a5e" opacity="0.75"/><rect x="8" y="104" width="4" height="4" fill="#8a8c90" opacity="0.75"/><rect x="8" y="108" width="4" height="4" fill="#a8a69c" opacity="0.95"/><rect x="8" y="112" width="4" height="4" fill="#b0aca0" opacity="0.75"/><rect x="8" y="116" width="4" height="4" fill="#bfb08a" opacity="0.95"/><rect x="12" y="88" width="4" height="4" fill="#8e8876" opacity="0.75"/><rect x="12" y="92" width="4" height="4" fill="#a8a69c" opacity="0.75"/><rect x="12" y="96" width="4" height="4" fill="#7f7a6c" opacity="0.75"/><rect x="12" y="100" width="4" height="4" fill="#8e8876" opacity="1"/><rect x="12" y="104" width="4" height="4" fill="#6f6a5e" opacity="0.75"/><rect x="12" y="108" width="4" height="4" fill="#97917f" opacity="0.75"/><rect x="12" y="112" width="4" height="4" fill="#a39a80" opacity="0.85"/><rect x="12" y="116" width="4" height="4" fill="#a8a69c" opacity="1"/><rect x="16" y="96" width="4" height="4" fill="#9c9684" opacity="0.75"/><rect x="16" y="100" width="4" height="4" fill="#6f6a5e" opacity="0.85"/><rect x="16" y="104" width="4" height="4" fill="#bfb08a" opacity="0.95"/><rect x="16" y="108" width="4" height="4" fill="#7f7a6c" opacity="0.75"/><rect x="16" y="112" width="4" height="4" fill="#a39a80" opacity="0.95"/><rect x="16" y="116" width="4" height="4" fill="#8e8876" opacity="1"/><rect x="20" y="88" width="4" height="4" fill="#8e8876" opacity="0.5"/><rect x="20" y="92" width="4" height="4" fill="#a39a80" opacity="0.75"/><rect x="20" y="96" width="4" height="4" fill="#8a8c90" opacity="1"/><rect x="20" y="100" width="4" height="4" fill="#6f6a5e" opacity="0.85"/><rect x="20" y="104" width="4" height="4" fill="#8a8c90" opacity="0.85"/><rect x="20" y="108" width="4" height="4" fill="#b0aca0" opacity="0.85"/><rect x="20" y="112" width="4" height="4" fill="#a8a69c" opacity="0.85"/><rect x="20" y="116" width="4" height="4" fill="#8e8876" opacity="1"/><rect x="24" y="92" width="4" height="4" fill="#a39a80" opacity="0.85"/><rect x="24" y="96" width="4" height="4" fill="#9c9684" opacity="0.95"/><rect x="24" y="100" width="4" height="4" fill="#a39a80" opacity="0.95"/><rect x="24" y="104" width="4" height="4" fill="#b4a684" opacity="0.85"/><rect x="24" y="108" width="4" height="4" fill="#9c9684" opacity="1"/><rect x="24" y="112" width="4" height="4" fill="#a39a80" opacity="0.75"/><rect x="24" y="116" width="4" height="4" fill="#97917f" opacity="0.85"/><rect x="28" y="92" width="4" height="4" fill="#9c9684" opacity="0.5"/><rect x="28" y="96" width="4" height="4" fill="#7f7a6c" opacity="0.95"/><rect x="28" y="100" width="4" height="4" fill="#8e8876" opacity="1"/><rect x="28" y="104" width="4" height="4" fill="#8e8876" opacity="0.75"/><rect x="28" y="108" width="4" height="4" fill="#9c9684" opacity="0.85"/><rect x="28" y="112" width="4" height="4" fill="#a39a80" opacity="0.85"/><rect x="28" y="116" width="4" height="4" fill="#bfb08a" opacity="0.95"/><rect x="32" y="92" width="4" height="4" fill="#9c9684" opacity="1"/><rect x="32" y="96" width="4" height="4" fill="#a8a69c" opacity="0.85"/><rect x="32" y="100" width="4" height="4" fill="#6f6a5e" opacity="0.85"/><rect x="32" y="104" width="4" height="4" fill="#7f7a6c" opacity="0.85"/><rect x="32" y="108" width="4" height="4" fill="#9c9684" opacity="0.85"/><rect x="32" y="112" width="4" height="4" fill="#b0aca0" opacity="0.85"/><rect x="32" y="116" width="4" height="4" fill="#b4a684" opacity="0.85"/><rect x="36" y="96" width="4" height="4" fill="#6f6a5e" opacity="0.85"/><rect x="36" y="100" width="4" height="4" fill="#8a8c90" opacity="1"/><rect x="36" y="104" width="4" height="4" fill="#a8a69c" opacity="0.75"/><rect x="36" y="108" width="4" height="4" fill="#8e8876" opacity="0.75"/><rect x="36" y="112" width="4" height="4" fill="#a39a80" opacity="0.75"/><rect x="36" y="116" width="4" height="4" fill="#97917f" opacity="0.95"/><rect x="40" y="96" width="4" height="4" fill="#a8a69c" opacity="0.95"/><rect x="40" y="100" width="4" height="4" fill="#7f7a6c" opacity="1"/><rect x="40" y="104" width="4" height="4" fill="#b0aca0" opacity="0.85"/><rect x="40" y="108" width="4" height="4" fill="#b4a684" opacity="0.75"/><rect x="40" y="112" width="4" height="4" fill="#8a8c90" opacity="0.85"/><rect x="40" y="116" width="4" height="4" fill="#7f7a6c" opacity="0.75"/><rect x="44" y="84" width="4" height="4" fill="#b0aca0" opacity="0.85"/><rect x="44" y="88" width="4" height="4" fill="#8e8876" opacity="0.75"/><rect x="44" y="92" width="4" height="4" fill="#a8a69c" opacity="0.95"/><rect x="44" y="96" width="4" height="4" fill="#97917f" opacity="1"/><rect x="44" y="100" width="4" height="4" fill="#a39a80" opacity="0.75"/><rect x="44" y="104" width="4" height="4" fill="#7f7a6c" opacity="0.85"/><rect x="44" y="108" width="4" height="4" fill="#c2b48e" opacity="0.95"/><rect x="44" y="112" width="4" height="4" fill="#8e8876" opacity="0.85"/><rect x="44" y="116" width="4" height="4" fill="#b4a684" opacity="0.95"/><rect x="48" y="88" width="4" height="4" fill="#9c9684" opacity="0.85"/><rect x="48" y="92" width="4" height="4" fill="#a39a80" opacity="0.75"/><rect x="48" y="96" width="4" height="4" fill="#bfb08a" opacity="1"/><rect x="48" y="100" width="4" height="4" fill="#a39a80" opacity="0.95"/><rect x="48" y="104" width="4" height="4" fill="#9c9684" opacity="0.75"/><rect x="48" y="108" width="4" height="4" fill="#8a8c90" opacity="0.75"/><rect x="48" y="112" width="4" height="4" fill="#b0aca0" opacity="0.75"/><rect x="48" y="116" width="4" height="4" fill="#bfb08a" opacity="0.95"/><rect x="52" y="84" width="4" height="4" fill="#8a8c90" opacity="0.75"/><rect x="52" y="88" width="4" height="4" fill="#b0aca0" opacity="0.95"/><rect x="52" y="92" width="4" height="4" fill="#b0aca0" opacity="0.75"/><rect x="52" y="96" width="4" height="4" fill="#bfb08a" opacity="0.85"/><rect x="52" y="100" width="4" height="4" fill="#8e8876" opacity="0.95"/><rect x="52" y="104" width="4" height="4" fill="#8e8876" opacity="1"/><rect x="52" y="108" width="4" height="4" fill="#a39a80" opacity="1"/><rect x="52" y="112" width="4" height="4" fill="#9c9684" opacity="1"/><rect x="52" y="116" width="4" height="4" fill="#9c9684" opacity="0.75"/><rect x="56" y="92" width="4" height="4" fill="#9c9684" opacity="0.75"/><rect x="56" y="96" width="4" height="4" fill="#8e8876" opacity="0.75"/><rect x="56" y="100" width="4" height="4" fill="#6f6a5e" opacity="0.75"/><rect x="56" y="104" width="4" height="4" fill="#7f7a6c" opacity="0.75"/><rect x="56" y="108" width="4" height="4" fill="#b0aca0" opacity="1"/><rect x="56" y="112" width="4" height="4" fill="#a8a69c" opacity="0.95"/><rect x="56" y="116" width="4" height="4" fill="#8a8c90" opacity="1"/><rect x="60" y="88" width="4" height="4" fill="#c2b48e" opacity="0.75"/><rect x="60" y="92" width="4" height="4" fill="#7f7a6c" opacity="0.75"/><rect x="60" y="96" width="4" height="4" fill="#8a8c90" opacity="0.75"/><rect x="60" y="100" width="4" height="4" fill="#97917f" opacity="0.75"/><rect x="60" y="104" width="4" height="4" fill="#8a8c90" opacity="0.75"/><rect x="60" y="108" width="4" height="4" fill="#7f7a6c" opacity="1"/><rect x="60" y="112" width="4" height="4" fill="#bfb08a" opacity="0.75"/><rect x="60" y="116" width="4" height="4" fill="#b4a684" opacity="0.95"/><rect x="64" y="92" width="4" height="4" fill="#bfb08a" opacity="0.85"/><rect x="64" y="96" width="4" height="4" fill="#8a8c90" opacity="1"/><rect x="64" y="100" width="4" height="4" fill="#bfb08a" opacity="0.85"/><rect x="64" y="104" width="4" height="4" fill="#6f6a5e" opacity="1"/><rect x="64" y="108" width="4" height="4" fill="#97917f" opacity="0.95"/><rect x="64" y="112" width="4" height="4" fill="#97917f" opacity="1"/><rect x="64" y="116" width="4" height="4" fill="#a8a69c" opacity="0.85"/><rect x="68" y="84" width="4" height="4" fill="#97917f" opacity="0.95"/><rect x="68" y="88" width="4" height="4" fill="#b4a684" opacity="0.85"/><rect x="68" y="92" width="4" height="4" fill="#bfb08a" opacity="1"/><rect x="68" y="96" width="4" height="4" fill="#b0aca0" opacity="0.75"/><rect x="68" y="100" width="4" height="4" fill="#7f7a6c" opacity="0.75"/><rect x="68" y="104" width="4" height="4" fill="#8e8876" opacity="0.85"/><rect x="68" y="108" width="4" height="4" fill="#8a8c90" opacity="1"/><rect x="68" y="112" width="4" height="4" fill="#97917f" opacity="0.95"/><rect x="72" y="88" width="4" height="4" fill="#6f6a5e" opacity="1"/><rect x="72" y="92" width="4" height="4" fill="#b0aca0" opacity="0.95"/><rect x="72" y="96" width="4" height="4" fill="#bfb08a" opacity="1"/><rect x="72" y="100" width="4" height="4" fill="#a39a80" opacity="0.75"/><rect x="72" y="104" width="4" height="4" fill="#9c9684" opacity="0.95"/><rect x="72" y="108" width="4" height="4" fill="#6f6a5e" opacity="0.75"/><rect x="76" y="84" width="4" height="4" fill="#6f6a5e" opacity="0.75"/><rect x="76" y="88" width="4" height="4" fill="#a8a69c" opacity="0.85"/><rect x="76" y="92" width="4" height="4" fill="#97917f" opacity="1"/><rect x="76" y="96" width="4" height="4" fill="#7f7a6c" opacity="0.75"/><rect x="76" y="100" width="4" height="4" fill="#b4a684" opacity="0.85"/><rect x="76" y="104" width="4" height="4" fill="#6f6a5e" opacity="0.75"/><rect x="80" y="92" width="4" height="4" fill="#6f6a5e" opacity="0.75"/><rect x="80" y="96" width="4" height="4" fill="#97917f" opacity="0.85"/><rect x="80" y="100" width="4" height="4" fill="#7f7a6c" opacity="1"/><rect x="80" y="104" width="4" height="4" fill="#b0aca0" opacity="0.85"/><rect x="84" y="88" width="4" height="4" fill="#bfb08a" opacity="0.5"/><rect x="84" y="92" width="4" height="4" fill="#a8a69c" opacity="0.85"/><rect x="84" y="96" width="4" height="4" fill="#8e8876" opacity="0.85"/><rect x="84" y="100" width="4" height="4" fill="#b0aca0" opacity="1"/><rect x="84" y="104" width="4" height="4" fill="#b4a684" opacity="1"/><rect x="84" y="116" width="4" height="4" fill="#a8a69c" opacity="0.75"/><rect x="88" y="92" width="4" height="4" fill="#8a8c90" opacity="0.95"/><rect x="88" y="96" width="4" height="4" fill="#6f6a5e" opacity="0.95"/><rect x="88" y="100" width="4" height="4" fill="#8e8876" opacity="0.85"/><rect x="88" y="104" width="4" height="4" fill="#97917f" opacity="0.75"/><rect x="92" y="88" width="4" height="4" fill="#7f7a6c" opacity="0.95"/><rect x="92" y="92" width="4" height="4" fill="#bfb08a" opacity="0.75"/><rect x="92" y="96" width="4" height="4" fill="#a39a80" opacity="0.75"/><rect x="92" y="100" width="4" height="4" fill="#bfb08a" opacity="1"/><rect x="96" y="84" width="4" height="4" fill="#b4a684" opacity="0.75"/><rect x="96" y="88" width="4" height="4" fill="#6f6a5e" opacity="0.95"/><rect x="96" y="92" width="4" height="4" fill="#8a8c90" opacity="0.85"/><rect x="96" y="96" width="4" height="4" fill="#c2b48e" opacity="0.85"/><rect x="96" y="100" width="4" height="4" fill="#8a8c90" opacity="1"/><rect x="96" y="104" width="4" height="4" fill="#97917f" opacity="0.75"/><rect x="100" y="92" width="4" height="4" fill="#7f7a6c" opacity="0.95"/><rect x="100" y="96" width="4" height="4" fill="#9c9684" opacity="1"/><rect x="100" y="100" width="4" height="4" fill="#7f7a6c" opacity="0.85"/><rect x="100" y="104" width="4" height="4" fill="#c2b48e" opacity="0.85"/><rect x="104" y="92" width="4" height="4" fill="#a39a80" opacity="0.5"/><rect x="104" y="96" width="4" height="4" fill="#a39a80" opacity="1"/><rect x="104" y="100" width="4" height="4" fill="#c2b48e" opacity="0.75"/><rect x="104" y="104" width="4" height="4" fill="#c2b48e" opacity="1"/><rect x="108" y="96" width="4" height="4" fill="#c2b48e" opacity="0.5"/><rect x="108" y="100" width="4" height="4" fill="#a8a69c" opacity="1"/><rect x="108" y="104" width="4" height="4" fill="#7f7a6c" opacity="1"/><rect x="112" y="92" width="4" height="4" fill="#97917f" opacity="0.75"/><rect x="112" y="96" width="4" height="4" fill="#9c9684" opacity="1"/><rect x="112" y="100" width="4" height="4" fill="#7f7a6c" opacity="0.75"/><rect x="112" y="104" width="4" height="4" fill="#b0aca0" opacity="0.85"/><rect x="112" y="108" width="4" height="4" fill="#a39a80" opacity="0.75"/><rect x="116" y="96" width="4" height="4" fill="#b0aca0" opacity="0.5"/><rect x="116" y="100" width="4" height="4" fill="#97917f" opacity="0.95"/><rect x="116" y="104" width="4" height="4" fill="#8e8876" opacity="1"/><rect x="116" y="108" width="4" height="4" fill="#b0aca0" opacity="1"/><rect x="116" y="112" width="4" height="4" fill="#c2b48e" opacity="0.75"/><rect x="120" y="96" width="4" height="4" fill="#c2b48e" opacity="0.5"/><rect x="120" y="100" width="4" height="4" fill="#a39a80" opacity="1"/><rect x="120" y="104" width="4" height="4" fill="#6f6a5e" opacity="1"/><rect x="120" y="108" width="4" height="4" fill="#c2b48e" opacity="1"/><rect x="120" y="112" width="4" height="4" fill="#c2b48e" opacity="0.85"/><rect x="120" y="116" width="4" height="4" fill="#6f6a5e" opacity="0.85"/><rect x="124" y="88" width="4" height="4" fill="#c2b48e" opacity="0.85"/><rect x="124" y="92" width="4" height="4" fill="#97917f" opacity="0.85"/><rect x="124" y="96" width="4" height="4" fill="#b4a684" opacity="0.95"/><rect x="124" y="100" width="4" height="4" fill="#9c9684" opacity="0.95"/><rect x="124" y="104" width="4" height="4" fill="#97917f" opacity="0.95"/><rect x="124" y="108" width="4" height="4" fill="#97917f" opacity="0.85"/><rect x="124" y="112" width="4" height="4" fill="#b4a684" opacity="0.75"/><rect x="124" y="116" width="4" height="4" fill="#b4a684" opacity="0.85"/><rect x="128" y="92" width="4" height="4" fill="#a8a69c" opacity="0.5"/><rect x="128" y="96" width="4" height="4" fill="#a8a69c" opacity="0.75"/><rect x="128" y="100" width="4" height="4" fill="#c2b48e" opacity="1"/><rect x="128" y="104" width="4" height="4" fill="#97917f" opacity="0.85"/><rect x="128" y="108" width="4" height="4" fill="#6f6a5e" opacity="1"/><rect x="128" y="112" width="4" height="4" fill="#8e8876" opacity="0.75"/><rect x="128" y="116" width="4" height="4" fill="#9c9684" opacity="0.85"/><rect x="132" y="92" width="4" height="4" fill="#8e8876" opacity="0.95"/><rect x="132" y="96" width="4" height="4" fill="#c2b48e" opacity="0.95"/><rect x="132" y="100" width="4" height="4" fill="#8e8876" opacity="0.85"/><rect x="132" y="104" width="4" height="4" fill="#8e8876" opacity="1"/><rect x="132" y="108" width="4" height="4" fill="#a39a80" opacity="0.75"/><rect x="132" y="112" width="4" height="4" fill="#b4a684" opacity="1"/><rect x="132" y="116" width="4" height="4" fill="#b4a684" opacity="0.85"/><rect x="136" y="80" width="4" height="4" fill="#b4a684" opacity="0.5"/><rect x="136" y="84" width="4" height="4" fill="#6f6a5e" opacity="0.95"/><rect x="136" y="88" width="4" height="4" fill="#9c9684" opacity="0.75"/><rect x="136" y="92" width="4" height="4" fill="#b4a684" opacity="0.75"/><rect x="136" y="96" width="4" height="4" fill="#8e8876" opacity="1"/><rect x="136" y="100" width="4" height="4" fill="#bfb08a" opacity="0.75"/><rect x="136" y="104" width="4" height="4" fill="#8a8c90" opacity="1"/><rect x="136" y="108" width="4" height="4" fill="#c2b48e" opacity="1"/><rect x="136" y="112" width="4" height="4" fill="#a8a69c" opacity="0.95"/><rect x="136" y="116" width="4" height="4" fill="#9c9684" opacity="0.85"/><rect x="140" y="84" width="4" height="4" fill="#b0aca0" opacity="0.5"/><rect x="140" y="88" width="4" height="4" fill="#97917f" opacity="0.75"/><rect x="140" y="92" width="4" height="4" fill="#a8a69c" opacity="0.85"/><rect x="140" y="96" width="4" height="4" fill="#bfb08a" opacity="1"/><rect x="140" y="100" width="4" height="4" fill="#a8a69c" opacity="0.95"/><rect x="140" y="104" width="4" height="4" fill="#9c9684" opacity="0.85"/><rect x="140" y="108" width="4" height="4" fill="#8e8876" opacity="0.85"/><rect x="140" y="112" width="4" height="4" fill="#bfb08a" opacity="0.75"/><rect x="140" y="116" width="4" height="4" fill="#b0aca0" opacity="0.75"/><rect x="144" y="92" width="4" height="4" fill="#c2b48e" opacity="0.85"/><rect x="144" y="96" width="4" height="4" fill="#7f7a6c" opacity="0.95"/><rect x="144" y="100" width="4" height="4" fill="#8e8876" opacity="0.95"/><rect x="144" y="104" width="4" height="4" fill="#a8a69c" opacity="0.85"/><rect x="144" y="108" width="4" height="4" fill="#bfb08a" opacity="0.85"/><rect x="144" y="112" width="4" height="4" fill="#a8a69c" opacity="0.95"/><rect x="144" y="116" width="4" height="4" fill="#a8a69c" opacity="0.85"/><rect x="148" y="84" width="4" height="4" fill="#bfb08a" opacity="0.75"/><rect x="148" y="88" width="4" height="4" fill="#8a8c90" opacity="0.95"/><rect x="148" y="92" width="4" height="4" fill="#a39a80" opacity="0.75"/><rect x="148" y="96" width="4" height="4" fill="#6f6a5e" opacity="0.95"/><rect x="148" y="100" width="4" height="4" fill="#97917f" opacity="0.75"/><rect x="148" y="104" width="4" height="4" fill="#6f6a5e" opacity="0.95"/><rect x="148" y="108" width="4" height="4" fill="#bfb08a" opacity="0.95"/><rect x="148" y="112" width="4" height="4" fill="#6f6a5e" opacity="0.85"/><rect x="148" y="116" width="4" height="4" fill="#9c9684" opacity="1"/><rect x="152" y="84" width="4" height="4" fill="#c2b48e" opacity="1"/><rect x="152" y="88" width="4" height="4" fill="#6f6a5e" opacity="1"/><rect x="152" y="92" width="4" height="4" fill="#b0aca0" opacity="0.85"/><rect x="152" y="96" width="4" height="4" fill="#a8a69c" opacity="0.75"/><rect x="152" y="100" width="4" height="4" fill="#8e8876" opacity="0.75"/><rect x="152" y="104" width="4" height="4" fill="#b0aca0" opacity="0.75"/><rect x="152" y="108" width="4" height="4" fill="#7f7a6c" opacity="0.85"/><rect x="152" y="112" width="4" height="4" fill="#a8a69c" opacity="1"/><rect x="152" y="116" width="4" height="4" fill="#97917f" opacity="0.75"/><rect x="156" y="92" width="4" height="4" fill="#7f7a6c" opacity="0.75"/><rect x="156" y="96" width="4" height="4" fill="#7f7a6c" opacity="0.95"/><rect x="156" y="100" width="4" height="4" fill="#c2b48e" opacity="0.95"/><rect x="156" y="104" width="4" height="4" fill="#c2b48e" opacity="1"/><rect x="156" y="108" width="4" height="4" fill="#6f6a5e" opacity="0.75"/><rect x="156" y="112" width="4" height="4" fill="#6f6a5e" opacity="1"/><rect x="156" y="116" width="4" height="4" fill="#c2b48e" opacity="0.75"/><rect x="160" y="88" width="4" height="4" fill="#a8a69c" opacity="0.75"/><rect x="160" y="92" width="4" height="4" fill="#a8a69c" opacity="0.85"/><rect x="160" y="96" width="4" height="4" fill="#b4a684" opacity="1"/><rect x="160" y="100" width="4" height="4" fill="#c2b48e" opacity="1"/><rect x="160" y="104" width="4" height="4" fill="#a8a69c" opacity="0.75"/><rect x="160" y="108" width="4" height="4" fill="#a8a69c" opacity="1"/><rect x="160" y="112" width="4" height="4" fill="#c2b48e" opacity="0.95"/><rect x="160" y="116" width="4" height="4" fill="#9c9684" opacity="1"/><rect x="164" y="88" width="4" height="4" fill="#8a8c90" opacity="0.95"/><rect x="164" y="92" width="4" height="4" fill="#c2b48e" opacity="0.95"/><rect x="164" y="96" width="4" height="4" fill="#6f6a5e" opacity="0.95"/><rect x="164" y="100" width="4" height="4" fill="#a39a80" opacity="0.95"/><rect x="164" y="104" width="4" height="4" fill="#97917f" opacity="0.75"/><rect x="164" y="108" width="4" height="4" fill="#6f6a5e" opacity="0.75"/><rect x="164" y="112" width="4" height="4" fill="#a8a69c" opacity="0.85"/><rect x="164" y="116" width="4" height="4" fill="#a39a80" opacity="1"/><rect x="168" y="88" width="4" height="4" fill="#9c9684" opacity="0.75"/><rect x="168" y="92" width="4" height="4" fill="#8e8876" opacity="0.95"/><rect x="168" y="96" width="4" height="4" fill="#a8a69c" opacity="0.85"/><rect x="168" y="100" width="4" height="4" fill="#7f7a6c" opacity="1"/><rect x="168" y="104" width="4" height="4" fill="#a39a80" opacity="0.85"/><rect x="168" y="108" width="4" height="4" fill="#b0aca0" opacity="0.75"/><rect x="168" y="112" width="4" height="4" fill="#b4a684" opacity="1"/><rect x="168" y="116" width="4" height="4" fill="#9c9684" opacity="0.85"/><rect x="172" y="96" width="4" height="4" fill="#9c9684" opacity="0.5"/><rect x="172" y="100" width="4" height="4" fill="#8a8c90" opacity="1"/><rect x="172" y="104" width="4" height="4" fill="#97917f" opacity="0.75"/><rect x="172" y="108" width="4" height="4" fill="#bfb08a" opacity="0.75"/><rect x="172" y="112" width="4" height="4" fill="#8e8876" opacity="0.85"/><rect x="172" y="116" width="4" height="4" fill="#8a8c90" opacity="0.95"/><rect x="176" y="88" width="4" height="4" fill="#9c9684" opacity="1"/><rect x="176" y="92" width="4" height="4" fill="#6f6a5e" opacity="0.95"/><rect x="176" y="96" width="4" height="4" fill="#bfb08a" opacity="1"/><rect x="176" y="100" width="4" height="4" fill="#7f7a6c" opacity="0.85"/><rect x="176" y="104" width="4" height="4" fill="#97917f" opacity="0.85"/><rect x="176" y="108" width="4" height="4" fill="#8e8876" opacity="1"/><rect x="176" y="112" width="4" height="4" fill="#c2b48e" opacity="0.95"/><rect x="176" y="116" width="4" height="4" fill="#7f7a6c" opacity="0.95"/></g>
    </svg></div><div class="tt" style="background:linear-gradient(rgba(62,74,96,.97),rgba(92,104,128,.95))">Why is it important to share<br>content?</div><div class="abs" style="left:131.500px;top:85px"><svg viewBox="0 0 34 24" width="34" height="24"><rect width="34" height="24" rx="7" fill="#34495e"/><path d="M12.500 5.500L23 12L12.500 18.500z" fill="#b4bac4"/></svg></div></div>

  <div class="th" style="left:1316px;top:857px"><div class="img"><svg viewBox="0 0 182 124" preserveAspectRatio="none"><defs></defs><rect width="182" height="124" fill="url(#pg)"/><g stroke="#5f636b" stroke-width="1" opacity=".8"><line x1="0" y1="22" x2="182" y2="131"/><line x1="182" y1="22" x2="0" y2="131"/></g></svg></div><div class="tt">OpenCourseWare Consortium</div><div class="ic">html</div></div>

  <!-- empty drop slot -->
  <div class="abs" style="left:900px;top:857px;width:182px;height:124px">
    <svg width="182" height="124"><rect x="1" y="1" width="180" height="122" fill="none" stroke="#8a919c" stroke-width="2" stroke-dasharray="6 6"/><path d="M81.500 62.500h18M90.500 53.500v18" stroke="#fff" stroke-width="4"/></svg>
  </div>
</div>
<!-- ================= VIDEO CONTAINER ================= -->
<div class="abs" style="left:470px;top:246px;width:834px;height:559px;background:#141414"></div>
<svg class="abs" style="left:468px;top:244px" width="838" height="563"><g stroke="#fff" stroke-width="2" stroke-dasharray="6 6" fill="none"><path d="M2 1H838"/><path d="M1 3V563"/><path d="M837 2V563"/></g><rect x="0" y="0" width="2" height="2" fill="#fff"/><rect x="830" y="0" width="8" height="2" fill="#fff"/><rect x="836" y="561" width="2" height="2" fill="#fff"/></svg>
<!-- play strip -->
<div class="abs" style="left:480px;top:256px;width:50px;height:539px;background:#272727"></div>
<svg class="abs" style="left:494px;top:513px" width="24" height="24"><path d="M1 .5L23 11.500L1 23z" fill="#b4b4b4"/></svg>
<!-- video frame -->
<svg class="abs" style="left:540px;top:382px" width="511" height="285" viewBox="0 0 511 285">
  <defs>
    <linearGradient id="vb" x1="0" x2="1" y1="0" y2="0"><stop offset="0" stop-color="#a9c6d0"/><stop offset=".25" stop-color="#bcd3d8"/><stop offset=".48" stop-color="#dfe2da"/><stop offset=".62" stop-color="#efe6d2"/><stop offset=".8" stop-color="#ecd3a8"/><stop offset=".93" stop-color="#dcb47a"/><stop offset="1" stop-color="#b98e54"/></linearGradient>
    <linearGradient id="s1" x1="0" x2="1" y1="0" y2="0"><stop offset="0" stop-color="#fff" stop-opacity="0"/><stop offset=".12" stop-color="#fff" stop-opacity=".5"/><stop offset=".36" stop-color="#fff" stop-opacity=".5"/><stop offset=".46" stop-color="#c9a87a" stop-opacity=".35"/><stop offset=".52" stop-color="#fff" stop-opacity="0"/><stop offset=".9" stop-color="#6f93a0" stop-opacity=".12"/><stop offset=".96" stop-color="#c9a87a" stop-opacity=".3"/><stop offset="1" stop-color="#fff" stop-opacity="0"/></linearGradient>
    <linearGradient id="s2" x1="0" x2="1" y1="0" y2="0"><stop offset="0" stop-color="#fff" stop-opacity="0"/><stop offset=".3" stop-color="#fff" stop-opacity=".16"/><stop offset=".5" stop-color="#fff" stop-opacity="0"/><stop offset=".7" stop-color="#b08a58" stop-opacity=".10"/><stop offset="1" stop-color="#fff" stop-opacity="0"/></linearGradient><linearGradient id="s3" x1="0" x2="1" y1="0" y2="0"><stop offset="0" stop-color="#7fa3b0" stop-opacity="0"/><stop offset=".25" stop-color="#7fa3b0" stop-opacity=".22"/><stop offset=".5" stop-color="#fff" stop-opacity="0"/><stop offset=".75" stop-color="#fff" stop-opacity=".3"/><stop offset="1" stop-color="#fff" stop-opacity="0"/></linearGradient><pattern id="p3" width="47" height="10" patternUnits="userSpaceOnUse" x="9"><rect width="47" height="10" fill="url(#s3)"/></pattern>
    <pattern id="p1" width="29" height="10" patternUnits="userSpaceOnUse"><rect width="29" height="10" fill="url(#s1)"/></pattern>
    <pattern id="p2" width="13.700" height="10" patternUnits="userSpaceOnUse" x="3"><rect width="13.700" height="10" fill="url(#s2)"/></pattern>
    <linearGradient id="vt" x1="0" x2="0" y1="0" y2="1"><stop offset="0" stop-color="#fff" stop-opacity=".20"/><stop offset=".45" stop-color="#fff" stop-opacity="0"/><stop offset=".8" stop-color="#2a2a22" stop-opacity=".22"/><stop offset=".95" stop-color="#1e1e18" stop-opacity=".5"/><stop offset="1" stop-color="#14140e" stop-opacity=".75"/></linearGradient>
    <linearGradient id="vf" x1="0" x2="1" y1="0" y2="0"><stop offset="0" stop-color="#e2d6bc"/><stop offset=".3" stop-color="#d0be9a"/><stop offset=".55" stop-color="#8e7a56"/><stop offset=".8" stop-color="#5e4c30"/><stop offset="1" stop-color="#3c2a16"/></linearGradient>
    <linearGradient id="vfl" x1="0" x2="0" y1="0" y2="1"><stop offset="0" stop-color="#000" stop-opacity=".18"/><stop offset=".2" stop-color="#000" stop-opacity="0"/><stop offset=".75" stop-color="#000" stop-opacity=".1"/><stop offset=".9" stop-color="#000" stop-opacity=".32"/><stop offset=".93" stop-color="#d8b060" stop-opacity=".18"/><stop offset="1" stop-color="#d8b060" stop-opacity=".3"/></linearGradient>
    <radialGradient id="vv" cx=".40" cy=".45" r=".85"><stop offset=".66" stop-color="#000" stop-opacity="0"/><stop offset="1" stop-color="#140a02" stop-opacity=".6"/></radialGradient>
    <radialGradient id="vg" cx=".88" cy=".45" r=".3"><stop offset="0" stop-color="#e0a860" stop-opacity=".18"/><stop offset="1" stop-color="#e0a860" stop-opacity="0"/></radialGradient>
    <radialGradient id="vfr" cx="1" cy="1.050" r=".62"><stop offset="0" stop-color="#140c04" stop-opacity=".9"/><stop offset=".45" stop-color="#140c04" stop-opacity=".5"/><stop offset="1" stop-color="#140c04" stop-opacity="0"/></radialGradient>
    <filter id="vbl" x="-20%" y="-50%" width="140%" height="200%"><feGaussianBlur stdDeviation="4"/></filter>
    <filter id="vb2" x="-20%" y="-50%" width="140%" height="200%"><feGaussianBlur stdDeviation="9"/></filter>
  </defs>
  <rect width="511" height="226" fill="url(#vb)"/>
  <rect width="511" height="226" fill="url(#p1)"/>
  <rect width="511" height="226" fill="url(#p2)"/>
  <rect width="511" height="226" fill="url(#p3)"/>
  <rect width="511" height="226" fill="url(#vg)"/>
  <rect width="511" height="226" fill="url(#vt)"/>
  <rect y="224" width="511" height="61" fill="url(#vf)"/>
  <rect y="224" width="511" height="61" fill="url(#vfl)"/>
  <rect x="0" y="224" width="511" height="61" fill="url(#vfr)"/>
  <!-- shadows -->
  <g filter="url(#vb2)"><ellipse cx="330" cy="215" rx="45" ry="22" fill="#4a3c28" opacity=".35"/></g>
  <g filter="url(#vbl)"><ellipse cx="235" cy="244" rx="132" ry="9" fill="#14110c" opacity=".92"/><ellipse cx="250" cy="148" rx="20" ry="26" fill="#54483a" opacity=".4"/></g>
  <!-- car -->
  <g>
    <path d="M104 217L102.500 205L106 196L124 188.500L142 181L160 165.500L178 158L194 156L262 159.500L274 163.500L279 178.500L300 182L334 189L346 194L351.500 203L356 214L355.500 226L347 232L322 236L300 237L298 226Q296 212 277 212Q258 212 255 232.500L190 229L162 226.500Q160 210 141 210Q124 212 124 222.500L110 220.500z" fill="#f2eee3"/>
    <path d="M104 206L124 196L160 191L240 194L300 195L346 199.500L352 206L300 203L240 202.500L160 199L124 203.500z" fill="#fff" opacity=".65"/>
    <path d="M110 220L124 222L162 226L190 228.500L255 232L255 227L190 223L124 217L108 214z" fill="#cfcbbf" opacity=".8"/>
    <!-- windows -->
    <path d="M198.500 165L226 164.500L232.500 183L198.500 183z" fill="#2b2a28"/><path d="M205 183L207 173L215 168.500L222 183z" fill="#8f8a7d" opacity=".85"/>
    <path d="M231.500 164.500L270 165.500L278 178.500L239 182.500z" fill="#b7b3a6"/><path d="M233 165L244 165.500L250 181L240 182z" fill="#a09c90"/>
    <circle cx="238.500" cy="169.500" r="4.200" fill="#2b2927"/><path d="M234 174L243 173L245 182L238 182.600z" fill="#3a3835"/>
    <ellipse cx="258" cy="176.500" rx="6.500" ry="4" fill="none" stroke="#e3dfd4" stroke-width="1"/>
    <path d="M226 164.500L231.500 164.500L239 182.500L232.500 183z" fill="#f2eee3"/><path d="M261 165.500L271 178.500M266 165.500L275 177" stroke="#efebe0" stroke-width="1.100"/>
    <path d="M194 156L262 159.500L274 163.500L272.500 165.500L232 164L196 162.500z" fill="#f7f4ec"/><path d="M196 162.500L232 164L272.500 165.500" stroke="#bdb9ac" stroke-width=".7" fill="none"/>
    <path d="M165 166L180 160L193 160L191 184L160 184z" fill="#e6e2d6"/>
    <circle cx="283.500" cy="175.500" r="2.200" fill="#dcd8cc" stroke="#9a968a" stroke-width=".5"/>
    <path d="M187.500 184L188.500 228.500M237 183L238 231" stroke="#c4c0b3" stroke-width="1"/>
    <path d="M186 213.300L236 213.300M239 213.500L254 214.500" stroke="#aaa699" stroke-width="1.400" fill="none"/>
    <!-- wheels -->
    <circle cx="276.500" cy="234" r="20" fill="#1b1712"/><circle cx="276.500" cy="234" r="12" fill="#ebe7db"/><circle cx="276.500" cy="234" r="8" fill="#c9c5ba"/><circle cx="276.500" cy="234" r="3.500" fill="#f4f1e8"/>
    <circle cx="140.500" cy="223.500" r="13.500" fill="#1b1712"/><circle cx="140.500" cy="223.500" r="9.400" fill="#ebe7db"/><circle cx="140.500" cy="223.500" r="5.500" fill="#c9c5ba"/><circle cx="140.500" cy="223.500" r="2.200" fill="#f4f1e8"/>
    <!-- front -->
    <path d="M303 222L352 215L357.500 213.500L358 226L352 229.500L306 234.500z" fill="#dedace"/><path d="M304 226L356 219.500" stroke="#b9b5a8" stroke-width="1.200"/>
    <path d="M316 211L345 203.500L348 205L346 208L320 215z" fill="#2e2c2a"/>
    <ellipse cx="300" cy="180" rx="8.500" ry="4" fill="#bdb9ac"/><ellipse cx="300" cy="178.500" rx="5" ry="2.200" fill="#e8e4d8"/>
    <circle cx="313.500" cy="203.500" r="3.600" fill="#fff" stroke="#c9c5b8" stroke-width=".6"/><circle cx="345" cy="199" r="3" fill="#fff" stroke="#c9c5b8" stroke-width=".6"/>
    <path d="M352 210L357 209L357.500 230L353 231z" fill="#c9c5b8"/>
    <path d="M99.500 213L108 212.500L108 219L99.500 219.500z" fill="#e8e4d8"/>
    <!-- megaphone -->
    <path d="M200 136.500L222 124.500L222 151L200 141z" fill="#ece8dc"/><ellipse cx="225.300" cy="137.400" rx="8.800" ry="15.900" fill="#f8f5ee" stroke="#c6c2b5" stroke-width="1"/><path d="M206.600 143.500V155.500" stroke="#d8d4c8" stroke-width="1.400"/>
  </g>
  <!-- policeman -->
  <g>
    <path d="M174.500 141.500L176 136.500L183 135L188.500 137L189 141.500z" fill="#ebe7da"/><path d="M175.500 141.500L189.500 142.200L189.500 143.800L175.500 143z" fill="#24241f"/>
    <ellipse cx="182.300" cy="148" rx="4.500" ry="5" fill="#6e5c4c"/>
    <path d="M160.500 167L164 156.500L172 152.500L180 154L188 153.500L193 158.500L194.500 170L190.500 178L188.500 183L189.500 203L176 206.500L162.500 200.500L163.500 182z" fill="#252521"/>
    <path d="M188 161L191 152L194.500 153L195.500 169z" fill="#252521"/><circle cx="192" cy="151.500" r="2.500" fill="#8d7a68"/><rect x="190.800" y="147" width="2.400" height="4" rx="1" fill="#1d1d1a"/>
    <path d="M167 180.500L190 182.500" stroke="#77736a" stroke-width="1.100"/><path d="M176 156L178 180" stroke="#3b3b36" stroke-width="1"/>
    <circle cx="167.300" cy="199.800" r="3" fill="#efebde"/>
    <path d="M166.500 201L188.500 203.500L185 225L183 244L190 248L188 250.800L176 250.300L176.500 226L172 246L164 250.800L156.500 249.200L158 246.500L166 241z" fill="#2a2a26"/>
    <path d="M174.200 208L172.300 243" stroke="#9a968a" stroke-width="1.200"/>
  </g>
  <rect width="511" height="285" fill="url(#vv)"/>
</svg>
<!-- ================= INFOGRAPHIC ================= -->
<div id="info" class="abs" style="left:1060px;top:255px;width:232px;height:541px;background:#fff;overflow:hidden">
  <div class="abs" style="left:217px;top:0;width:15px;height:541px;background:linear-gradient(90deg,#ececec,#fafafa 35%,#fff)"></div>
  <div class="abs" style="left:221px;top:3px;width:8px;height:380px;border-radius:4px;background:#c3c3c3"></div>
  <div id="ig" class="abs" style="left:0;top:0;width:217px;height:541px;overflow:hidden;background:#a8a8a6">
    <div class="abs" style="left:0;top:0;width:218px;height:52px;background:#f99b33"></div>
    <div class="abs" style="left:0;top:52px;width:218px;height:88px;background:#646464"></div>
    <div class="abs" style="left:0;top:140px;width:218px;height:151px;background:#7b7b7b"></div>
    <div class="abs" style="left:0;top:291px;width:218px;height:26px;background:#f99b33"></div>
<div class="abs" style="left:27px;top:12.300px;width:26px;height:.7px;background:#fbe38a"></div><div class="abs" style="left:166px;top:12.300px;width:26px;height:.7px;background:#fbe38a"></div>
<div class="hd" style="left:-0.5px;top:8.60px;width:220px;color:#fbe38a;font-size:5.6px;letter-spacing:2.25px">HOW TO OBTAIN A</div>
<div class="abs" style="left:0;top:14px;width:218px;height:26px;text-align:center;font-family:'Liberation Serif',serif;font-style:italic;font-weight:bold;font-size:25px;line-height:26px;color:#fff;white-space:nowrap"><span style="display:inline-block;transform:scaleX(.935);transform-origin:50% 50%;letter-spacing:-.5px;margin:0 -30px;-webkit-text-stroke:.45px #fff">creative commons</span></div>
<div class="abs" style="left:27px;top:42.200px;width:52px;height:.7px;background:#fbe38a"></div><div class="abs" style="left:140px;top:42.200px;width:52px;height:.7px;background:#fbe38a"></div>
<div class="hd" style="left:0.0px;top:38.50px;width:220px;color:#fbe38a;font-size:5.6px;letter-spacing:2.3px">LICENSE</div>
<svg class="abs" style="left:90px;top:55px" width="36" height="46" viewBox="0 0 36 46"><circle cx="17.400" cy="7.400" r="5.400" fill="#f99b33"/><text x="17.400" y="9.900" font-size="7" font-weight="bold" fill="#fff" text-anchor="middle" font-family="Liberation Sans,sans-serif">1</text><circle cx="17.500" cy="28.800" r="13.300" fill="none" stroke="#fff" stroke-width="2"/><text x="17.500" y="35.400" font-size="18.500" font-weight="bold" fill="#fff" text-anchor="middle" font-family="Liberation Sans,sans-serif">C</text></svg>
<div class="hd" style="left:-2.5px;top:100.30px;width:220px;color:#f7e150;font-size:6.2px;letter-spacing:0.25px">GET A COPYRIGHT</div>
<div class="tx" style="left:72.0px;top:108.78px;width:70.5px;text-align:justify;text-align-last:justify">CC does not stand as a replacement</div>
<div class="tx" style="left:72.0px;top:114.03px;width:70.5px;text-align:justify;text-align-last:justify">or alternative for copyright. To learn</div>
<div class="tx" style="left:72.0px;top:119.28px;width:70.5px;text-align:center">about getting a copyright, visit:</div>
<div class="tx" style="left:72.0px;top:124.53px;width:70.5px;text-align:center">web.nlp.gov.ph/nlp/?q=node/646</div>
<svg class="abs" style="left:90px;top:144px" width="36" height="46" viewBox="0 0 36 46"><circle cx="17.400" cy="7.200" r="5.400" fill="#f99b33"/><text x="17.400" y="9.700" font-size="7" font-weight="bold" fill="#fff" text-anchor="middle" font-family="Liberation Sans,sans-serif">2</text><circle cx="17.900" cy="28.800" r="13.300" fill="none" stroke="#fff" stroke-width="2"/><text x="17.900" y="33.300" font-size="14" font-weight="bold" fill="#fff" text-anchor="middle" font-family="Liberation Sans,sans-serif" textLength="17" lengthAdjust="spacingAndGlyphs">cc</text></svg>
<div class="hd" style="left:-2.3px;top:189.40px;width:220px;color:#f7e150;font-size:6.2px;letter-spacing:0.25px">CHOOSE A LICENSE</div>
<div class="tx" style="left:72.5px;top:197.78px;width:70.0px;text-align:justify;text-align-last:justify">There's no need to register to get a</div>
<div class="tx" style="left:72.5px;top:203.03px;width:70.0px;text-align:center">license. CC licenses are free.</div>
<div class="hd" style="left:-50.3px;top:220.00px;width:220px;color:#f99b33;font-size:6.2px;letter-spacing:0.25px">ONLINE WORK</div>
<div class="hd" style="left:48.4px;top:220.00px;width:220px;color:#f99b33;font-size:6.2px;letter-spacing:0.25px">OFFLINE WORK</div>
<div class="tx" style="left:21.0px;top:228.88px;width:77.0px;text-align:center">For online work,</div>
<div class="tx" style="left:21.0px;top:234.12px;width:77.0px;text-align:justify;text-align-last:justify">visit <u>creativecommons.org/choose/</u> and</div>
<div class="tx" style="left:21.0px;top:239.38px;width:77.0px;text-align:justify;text-align-last:justify">choose your license. Fill out the form for</div>
<div class="tx" style="left:21.0px;top:244.62px;width:77.0px;text-align:justify;text-align-last:justify">optional metadata, copy the generated</div>
<div class="tx" style="left:21.0px;top:249.88px;width:77.0px;text-align:justify;text-align-last:justify">embed code, and place on the page</div>
<div class="tx" style="left:21.0px;top:255.12px;width:77.0px;text-align:center">where your work is displayed.</div>
<div class="tx" style="left:118.4px;top:228.88px;width:77.8px;text-align:center">For offline work,</div>
<div class="tx" style="left:118.4px;top:234.12px;width:77.8px;text-align:justify;text-align-last:justify">visit <u>creativecommons.org/choose/</u> and</div>
<div class="tx" style="left:118.4px;top:239.38px;width:77.8px;text-align:justify;text-align-last:justify">choose your license. Once a license is</div>
<div class="tx" style="left:118.4px;top:244.62px;width:77.8px;text-align:justify;text-align-last:justify">chosen, you can mark it with: <span style="color:#f6e069">"This work</span></div>
<div class="tx" style="left:118.4px;top:249.88px;width:77.8px;text-align:justify;text-align-last:justify"><span style="color:#f6e069">is licensed under the Creative Commons</span></div>
<div class="tx" style="left:118.4px;top:255.12px;width:77.8px;text-align:justify;text-align-last:justify"><span style="color:#f6e069">[insert name of license] License. To view a</span></div>
<div class="tx" style="left:118.4px;top:260.38px;width:77.8px;text-align:justify;text-align-last:justify"><span style="color:#f6e069">copy of the license, visit [insert url]."</span> You</div>
<div class="tx" style="left:118.4px;top:265.62px;width:77.8px;text-align:justify;text-align-last:justify">can also insert the applicable license</div>
<div class="tx" style="left:118.4px;top:270.88px;width:77.8px;text-align:justify;text-align-last:justify">buttons as seen below with the</div>
<div class="tx" style="left:118.4px;top:276.12px;width:77.8px;text-align:center">statement and URL link.</div>
<div class="abs" style="left:13px;top:302.800px;width:58px;height:2px;background:#f8e36a"></div><div class="abs" style="left:145px;top:302.800px;width:58px;height:2px;background:#f8e36a"></div>
<div class="hd" style="left:-0.5px;top:292.60px;width:220px;color:#fbe38a;font-size:6.2px;letter-spacing:2.6px">TYPES OF</div>
<div class="abs" style="left:0;top:297px;width:218px;height:20px;text-align:center;font-family:'Liberation Serif',serif;font-style:italic;font-weight:bold;font-size:19px;line-height:22px;color:#fff;white-space:nowrap"><span style="display:inline-block;-webkit-text-stroke:.3px #fff;transform:scaleX(.78);transform-origin:50% 50%;margin:0 -30px">cc licenses</span></div>
<svg class="abs" style="left:21.9px;top:325.2px" width="68.6" height="23.4" viewBox="0 0 68.600 23.400"><rect x=".4" y=".4" width="67.800" height="22.600" fill="#cfcfcd" stroke="#4c4c4a" stroke-width=".8"/><rect x=".4" y="17.600" width="67.800" height="5.400" fill="#4c4c4a"/><circle cx="12.800" cy="11.600" r="9.700" fill="#e9e9e7"/><circle cx="12.800" cy="11.600" r="8.200" fill="#fff" stroke="#2b2b2b" stroke-width="1.500"/><text x="12.800" y="14.700" font-size="9.200" font-weight="bold" fill="#2b2b2b" text-anchor="middle" font-family="Liberation Sans,sans-serif" textLength="11.400" lengthAdjust="spacingAndGlyphs">cc</text><circle cx="46" cy="8.8" r="5.9" fill="#fff" stroke="#2e2e2e" stroke-width="1.100"/><circle cx="46" cy="5.9" r="1.150" fill="#2e2e2e"/><path d="M44.2 7.500000000000001h3.600v3.600h-.800v3h-2v-3h-.800z" fill="#2e2e2e"/><text x="46" y="22.100" font-size="4.800" font-weight="bold" fill="#f6f6f6" text-anchor="middle" font-family="Liberation Sans,sans-serif">BY</text></svg>
<svg class="abs" style="left:125.9px;top:324.4px" width="68.6" height="23.4" viewBox="0 0 68.600 23.400"><rect x=".4" y=".4" width="67.800" height="22.600" fill="#cfcfcd" stroke="#4c4c4a" stroke-width=".8"/><rect x=".4" y="17.600" width="67.800" height="5.400" fill="#4c4c4a"/><circle cx="12.800" cy="11.600" r="9.700" fill="#e9e9e7"/><circle cx="12.800" cy="11.600" r="8.200" fill="#fff" stroke="#2b2b2b" stroke-width="1.500"/><text x="12.800" y="14.700" font-size="9.200" font-weight="bold" fill="#2b2b2b" text-anchor="middle" font-family="Liberation Sans,sans-serif" textLength="11.400" lengthAdjust="spacingAndGlyphs">cc</text><circle cx="38" cy="8.8" r="5.9" fill="#fff" stroke="#2e2e2e" stroke-width="1.100"/><circle cx="38" cy="5.9" r="1.150" fill="#2e2e2e"/><path d="M36.2 7.500000000000001h3.600v3.600h-.800v3h-2v-3h-.800z" fill="#2e2e2e"/><text x="38" y="22.100" font-size="4.800" font-weight="bold" fill="#f6f6f6" text-anchor="middle" font-family="Liberation Sans,sans-serif">BY</text><circle cx="56" cy="8.8" r="5.9" fill="#fff" stroke="#2e2e2e" stroke-width="1.100"/><path d="M53.4 9.200000000000001a2.700 2.700 0 1 0 1-2.500" fill="none" stroke="#2e2e2e" stroke-width="1.200"/><path d="M52.4 8.600000000000001l2.400.200l-1.300 1.900z" fill="#2e2e2e"/><text x="56" y="22.100" font-size="4.800" font-weight="bold" fill="#f6f6f6" text-anchor="middle" font-family="Liberation Sans,sans-serif">SA</text></svg>
<div class="hd" style="left:-53.5px;top:352.30px;width:220px;color:#f7e150;font-size:5.0px;letter-spacing:0.12px">ATTRIBUTION: CC BY</div>
<div class="tx" style="left:18.9px;top:361.48px;width:77.5px;text-align:justify;text-align-last:justify">This license lets others distribute, tweak</div>
<div class="tx" style="left:18.9px;top:366.73px;width:77.5px;text-align:justify;text-align-last:justify">and build upon your work, even</div>
<div class="tx" style="left:18.9px;top:371.98px;width:77.5px;text-align:justify;text-align-last:justify">commercially, as long as they credit you</div>
<div class="tx" style="left:18.9px;top:377.23px;width:77.5px;text-align:center">for the original creation.</div>
<div class="hd" style="left:50.6px;top:349.90px;width:220px;color:#f7e150;font-size:5.0px;letter-spacing:0.12px">ATTRIBUTION: SHAREALIKE</div>
<div class="hd" style="left:50.6px;top:355.80px;width:220px;color:#f7e150;font-size:5.0px;letter-spacing:0.12px">(CC BY-SA)</div>
<div class="tx" style="left:121.8px;top:364.77px;width:76.6px;text-align:justify;text-align-last:justify">This license lets others tweak and build</div>
<div class="tx" style="left:121.8px;top:370.02px;width:76.6px;text-align:justify;text-align-last:justify">upon your work, even for commercial</div>
<div class="tx" style="left:121.8px;top:375.27px;width:76.6px;text-align:justify;text-align-last:justify">purposes, as long as they credit you and</div>
<div class="tx" style="left:121.8px;top:380.52px;width:76.6px;text-align:justify;text-align-last:justify">license their new creations under</div>
<div class="tx" style="left:121.8px;top:385.77px;width:76.6px;text-align:center">identical terms.</div>
<svg class="abs" style="left:22.1px;top:398.1px" width="68.6" height="23.4" viewBox="0 0 68.600 23.400"><rect x=".4" y=".4" width="67.800" height="22.600" fill="#cfcfcd" stroke="#4c4c4a" stroke-width=".8"/><rect x=".4" y="17.600" width="67.800" height="5.400" fill="#4c4c4a"/><circle cx="12.800" cy="11.600" r="9.700" fill="#e9e9e7"/><circle cx="12.800" cy="11.600" r="8.200" fill="#fff" stroke="#2b2b2b" stroke-width="1.500"/><text x="12.800" y="14.700" font-size="9.200" font-weight="bold" fill="#2b2b2b" text-anchor="middle" font-family="Liberation Sans,sans-serif" textLength="11.400" lengthAdjust="spacingAndGlyphs">cc</text><circle cx="38" cy="8.8" r="5.9" fill="#fff" stroke="#2e2e2e" stroke-width="1.100"/><circle cx="38" cy="5.9" r="1.150" fill="#2e2e2e"/><path d="M36.2 7.500000000000001h3.600v3.600h-.800v3h-2v-3h-.800z" fill="#2e2e2e"/><text x="38" y="22.100" font-size="4.800" font-weight="bold" fill="#f6f6f6" text-anchor="middle" font-family="Liberation Sans,sans-serif">BY</text><circle cx="56" cy="8.8" r="5.9" fill="#fff" stroke="#2e2e2e" stroke-width="1.100"/><path d="M53.4 7.6000000000000005h5.200M53.4 10.100000000000001h5.200" stroke="#2e2e2e" stroke-width="1.300"/><text x="56" y="22.100" font-size="4.800" font-weight="bold" fill="#f6f6f6" text-anchor="middle" font-family="Liberation Sans,sans-serif">ND</text></svg>
<svg class="abs" style="left:125.1px;top:398.9px" width="68.6" height="23.4" viewBox="0 0 68.600 23.400"><rect x=".4" y=".4" width="67.800" height="22.600" fill="#cfcfcd" stroke="#4c4c4a" stroke-width=".8"/><rect x=".4" y="17.600" width="67.800" height="5.400" fill="#4c4c4a"/><circle cx="12.800" cy="11.600" r="9.700" fill="#e9e9e7"/><circle cx="12.800" cy="11.600" r="8.200" fill="#fff" stroke="#2b2b2b" stroke-width="1.500"/><text x="12.800" y="14.700" font-size="9.200" font-weight="bold" fill="#2b2b2b" text-anchor="middle" font-family="Liberation Sans,sans-serif" textLength="11.400" lengthAdjust="spacingAndGlyphs">cc</text><circle cx="38" cy="8.8" r="5.9" fill="#fff" stroke="#2e2e2e" stroke-width="1.100"/><circle cx="38" cy="5.9" r="1.150" fill="#2e2e2e"/><path d="M36.2 7.500000000000001h3.600v3.600h-.800v3h-2v-3h-.800z" fill="#2e2e2e"/><text x="38" y="22.100" font-size="4.800" font-weight="bold" fill="#f6f6f6" text-anchor="middle" font-family="Liberation Sans,sans-serif">BY</text><circle cx="56" cy="8.8" r="5.9" fill="#fff" stroke="#2e2e2e" stroke-width="1.100"/><text x="56" y="11.8" font-size="8.500" font-weight="bold" fill="#2e2e2e" text-anchor="middle" font-family="Liberation Sans,sans-serif">$</text><path d="M51.8 6.000000000000001L60.4 11.200000000000001" stroke="#fff" stroke-width="2"/><path d="M51.4 6.200000000000001L60.6 11.200000000000001" stroke="#2e2e2e" stroke-width="1"/><text x="56" y="22.100" font-size="4.800" font-weight="bold" fill="#f6f6f6" text-anchor="middle" font-family="Liberation Sans,sans-serif">NC</text></svg>
<div class="hd" style="left:-54.5px;top:422.70px;width:220px;color:#f7e150;font-size:5.0px;letter-spacing:0.12px">ATTRIBUTION: NO DERIVS</div>
<div class="hd" style="left:-54.5px;top:428.70px;width:220px;color:#f7e150;font-size:5.0px;letter-spacing:0.12px">(CC BY-ND)</div>
<div class="tx" style="left:18.0px;top:438.27px;width:77.0px;text-align:justify;text-align-last:justify">This license allows for redistribution,</div>
<div class="tx" style="left:18.0px;top:443.52px;width:77.0px;text-align:justify;text-align-last:justify">commercial and non-commercial, as</div>
<div class="tx" style="left:18.0px;top:448.77px;width:77.0px;text-align:justify;text-align-last:justify">long as it is passed along unchanged and</div>
<div class="tx" style="left:18.0px;top:454.02px;width:77.0px;text-align:center">in whole, with credit to you.</div>
<div class="hd" style="left:51.0px;top:422.70px;width:220px;color:#f7e150;font-size:5.0px;letter-spacing:0.12px">ATTRIBUTION: NON-COMMERCIAL</div>
<div class="hd" style="left:51.0px;top:428.70px;width:220px;color:#f7e150;font-size:5.0px;letter-spacing:0.12px">(CC BY-NC)</div>
<div class="tx" style="left:121.8px;top:438.27px;width:76.7px;text-align:justify;text-align-last:justify">This license lets others remix, tweak and</div>
<div class="tx" style="left:121.8px;top:443.52px;width:76.7px;text-align:justify;text-align-last:justify">build on your work non-commercially,</div>
<div class="tx" style="left:121.8px;top:448.77px;width:76.7px;text-align:justify;text-align-last:justify">and although their new works must also</div>
<div class="tx" style="left:121.8px;top:454.02px;width:76.7px;text-align:justify;text-align-last:justify">acknowledge you and be</div>
<div class="tx" style="left:121.8px;top:459.27px;width:76.7px;text-align:justify;text-align-last:justify">non-commercial, they don't have to</div>
<div class="tx" style="left:121.8px;top:464.52px;width:76.7px;text-align:justify;text-align-last:justify">license their derivative works on the</div>
<div class="tx" style="left:121.8px;top:469.77px;width:76.7px;text-align:center">same terms.</div>
<svg class="abs" style="left:20.0px;top:480.4px" width="68.6" height="23.4" viewBox="0 0 68.600 23.400"><rect x=".4" y=".4" width="67.800" height="22.600" fill="#cfcfcd" stroke="#4c4c4a" stroke-width=".8"/><rect x=".4" y="17.600" width="67.800" height="5.400" fill="#4c4c4a"/><circle cx="12.800" cy="11.600" r="9.700" fill="#e9e9e7"/><circle cx="12.800" cy="11.600" r="8.200" fill="#fff" stroke="#2b2b2b" stroke-width="1.500"/><text x="12.800" y="14.700" font-size="9.200" font-weight="bold" fill="#2b2b2b" text-anchor="middle" font-family="Liberation Sans,sans-serif" textLength="11.400" lengthAdjust="spacingAndGlyphs">cc</text><circle cx="34" cy="8.8" r="5.8" fill="#fff" stroke="#2e2e2e" stroke-width="1.100"/><circle cx="34" cy="5.9" r="1.150" fill="#2e2e2e"/><path d="M32.2 7.500000000000001h3.600v3.600h-.800v3h-2v-3h-.800z" fill="#2e2e2e"/><text x="34" y="22.100" font-size="4.800" font-weight="bold" fill="#f6f6f6" text-anchor="middle" font-family="Liberation Sans,sans-serif">BY</text><circle cx="49" cy="8.8" r="5.8" fill="#fff" stroke="#2e2e2e" stroke-width="1.100"/><text x="49" y="11.8" font-size="8.500" font-weight="bold" fill="#2e2e2e" text-anchor="middle" font-family="Liberation Sans,sans-serif">$</text><path d="M44.8 6.000000000000001L53.4 11.200000000000001" stroke="#fff" stroke-width="2"/><path d="M44.4 6.200000000000001L53.6 11.200000000000001" stroke="#2e2e2e" stroke-width="1"/><text x="49" y="22.100" font-size="4.800" font-weight="bold" fill="#f6f6f6" text-anchor="middle" font-family="Liberation Sans,sans-serif">NC</text><circle cx="62.5" cy="8.8" r="5.8" fill="#fff" stroke="#2e2e2e" stroke-width="1.100"/><path d="M59.9 9.200000000000001a2.700 2.700 0 1 0 1-2.500" fill="none" stroke="#2e2e2e" stroke-width="1.200"/><path d="M58.9 8.600000000000001l2.400.200l-1.300 1.900z" fill="#2e2e2e"/><text x="62.5" y="22.100" font-size="4.800" font-weight="bold" fill="#f6f6f6" text-anchor="middle" font-family="Liberation Sans,sans-serif">SA</text></svg>
<svg class="abs" style="left:127.0px;top:481.4px" width="68.6" height="23.4" viewBox="0 0 68.600 23.400"><rect x=".4" y=".4" width="67.800" height="22.600" fill="#cfcfcd" stroke="#4c4c4a" stroke-width=".8"/><rect x=".4" y="17.600" width="67.800" height="5.400" fill="#4c4c4a"/><circle cx="12.800" cy="11.600" r="9.700" fill="#e9e9e7"/><circle cx="12.800" cy="11.600" r="8.200" fill="#fff" stroke="#2b2b2b" stroke-width="1.500"/><text x="12.800" y="14.700" font-size="9.200" font-weight="bold" fill="#2b2b2b" text-anchor="middle" font-family="Liberation Sans,sans-serif" textLength="11.400" lengthAdjust="spacingAndGlyphs">cc</text><circle cx="34" cy="8.8" r="5.8" fill="#fff" stroke="#2e2e2e" stroke-width="1.100"/><circle cx="34" cy="5.9" r="1.150" fill="#2e2e2e"/><path d="M32.2 7.500000000000001h3.600v3.600h-.800v3h-2v-3h-.800z" fill="#2e2e2e"/><text x="34" y="22.100" font-size="4.800" font-weight="bold" fill="#f6f6f6" text-anchor="middle" font-family="Liberation Sans,sans-serif">BY</text><circle cx="49" cy="8.8" r="5.8" fill="#fff" stroke="#2e2e2e" stroke-width="1.100"/><text x="49" y="11.8" font-size="8.500" font-weight="bold" fill="#2e2e2e" text-anchor="middle" font-family="Liberation Sans,sans-serif">$</text><path d="M44.8 6.000000000000001L53.4 11.200000000000001" stroke="#fff" stroke-width="2"/><path d="M44.4 6.200000000000001L53.6 11.200000000000001" stroke="#2e2e2e" stroke-width="1"/><text x="49" y="22.100" font-size="4.800" font-weight="bold" fill="#f6f6f6" text-anchor="middle" font-family="Liberation Sans,sans-serif">NC</text><circle cx="62.5" cy="8.8" r="5.8" fill="#fff" stroke="#2e2e2e" stroke-width="1.100"/><path d="M59.9 7.6000000000000005h5.200M59.9 10.100000000000001h5.200" stroke="#2e2e2e" stroke-width="1.300"/><text x="62.5" y="22.100" font-size="4.800" font-weight="bold" fill="#f6f6f6" text-anchor="middle" font-family="Liberation Sans,sans-serif">ND</text></svg>
<div class="hd" style="left:-51.6px;top:505.00px;width:220px;color:#f7e150;font-size:5.0px;letter-spacing:0.12px">ATTRIBUTION: NON-COMMERCIAL-</div>
<div class="hd" style="left:-51.6px;top:510.90px;width:220px;color:#f7e150;font-size:5.0px;letter-spacing:0.12px">SHAREALIKE (CC BY-NC)</div>
<div class="tx" style="left:16.6px;top:520.58px;width:77.4px;text-align:justify;text-align-last:justify">It lets other remix, tweak and build upon</div>
<div class="tx" style="left:16.6px;top:525.83px;width:77.4px;text-align:justify;text-align-last:justify">your work non-commercially, as long as</div>
<div class="tx" style="left:16.6px;top:531.08px;width:77.4px;text-align:justify;text-align-last:justify">they credit you and license their</div>
<div class="tx" style="left:16.6px;top:536.33px;width:77.4px;text-align:center">creations under identical terms.</div>
<div class="hd" style="left:52.0px;top:505.00px;width:220px;color:#f7e150;font-size:5.0px;letter-spacing:0.12px">ATTRIBUTION: NON-COMMERCIAL-</div>
<div class="hd" style="left:52.0px;top:510.90px;width:220px;color:#f7e150;font-size:5.0px;letter-spacing:0.12px">NO DERIVS (CC BY-NC-ND)</div>
<div class="tx" style="left:121.8px;top:520.58px;width:76.7px;text-align:justify;text-align-last:justify">This is the most restrictive of the six main</div>
<div class="tx" style="left:121.8px;top:525.83px;width:76.7px;text-align:justify;text-align-last:justify">licenses, only allowing others to</div>
<div class="tx" style="left:121.8px;top:531.08px;width:76.7px;text-align:justify;text-align-last:justify">download your works and share them</div>
<div class="tx" style="left:121.8px;top:536.33px;width:76.7px;text-align:justify;text-align-last:justify">with others as long as they credit you,</div>
  </div>
</div>
<!-- ================= TIMELINE ================= -->
<div id="tl" class="abs" style="left:470px;top:805px;width:834px;height:20px;background:linear-gradient(90deg,#383e52 0 620px,#3c475b 620px)">
  <i style="left:84px;width:25px;background:#474d60"></i>
  <i style="left:123px;width:90px;background:#3b7d64"></i>
  <i style="left:254px;width:31px;background:#3b7d64"></i>
  <i style="left:309px;width:39px;background:#474d60"></i>
  <i style="left:401px;width:15px;background:#474d60"></i>
  <i style="left:476px;width:32px;background:#474d60"></i>
  <i style="left:545px;width:23px;background:#7a7c83"></i>
  <i style="left:567.5px;width:3.5px;background:#4b5364"></i>
  <i style="left:571px;width:6px;background:#9b9da6"></i>
  <i style="left:577px;width:28px;background:#5d9f82"></i>
  <i style="left:605px;width:14px;background:#3b7d64"></i>
  <i style="left:623px;width:19px;background:#596073"></i>
  <i style="left:644px;width:30px;background:#596073"></i>
  <i style="left:685px;width:20px;background:#596073"></i>
  <i style="left:719px;width:23px;background:#596073"></i>
  <i style="left:768px;width:42px;background:#596073"></i>
</div>
<!-- dashed line over timeline top (bottom edge of drop zone) -->
<svg class="abs" style="left:470px;top:805px" width="834" height="2"><path d="M0 1H834" stroke="rgba(225,230,238,.55)" stroke-width="2" stroke-dasharray="6 6"/></svg>
<!-- playhead -->
<div class="abs" style="left:1038px;top:825px;width:3px;height:4px;background:#6f8578"></div>
<div class="abs" style="left:1032px;top:827px;width:15px;height:15px;border-radius:50%;background:#dcdcdc;border:4px solid #6f8578"></div>
<!-- annotation close buttons -->
<div class="xb" style="left:628px;top:779px">×</div>
<div class="xb" style="left:730px;top:779px">×</div>
<div class="xb" style="left:1058px;top:779px">×</div>
<!-- ================= DRAGGED THUMB ================= -->
<div class="th" style="left:338px;top:176px;border-color:#fff;z-index:20;height:124px"><div class="img"><svg viewBox="0 0 178 120" preserveAspectRatio="none"><rect width="178" height="120" fill="url(#wg)"/><g filter="url(#bl)" fill="none" stroke="#8a8f99" stroke-width="2.200" opacity=".7"><path d="M52 30C44 44 62 56 72 48S90 56 86 76S94 108 112 104S126 84 140 90"/><path d="M-2 96C30 86 60 82 90 76S128 70 124 54S140 34 180 38"/><path d="M20 122C30 108 22 100 36 92S56 100 50 112"/></g><g filter="url(#bl1)" fill="#54585f" font-family="Liberation Serif,serif"><text x="8" y="70" font-size="50" opacity=".9">Ω</text><text x="128" y="86" font-size="38" opacity=".8" transform="rotate(-12 150 74) scale(-1 1) translate(-300 0)">N</text><text x="20" y="134" font-size="30" opacity=".7" font-family="Noto Sans CJK SC,sans-serif" transform="rotate(-8 40 120)">维</text></g><g filter="url(#bl)" fill="#5f636b" font-family="Liberation Serif,serif"><text x="96" y="0" font-size="44" opacity=".45" transform="rotate(165 120 2)">W</text></g></svg></div><div class="tt">Creative Commons</div><div class="wk">W</div></div>
<!-- ================= TOOLTIP ================= -->
<div class="abs" style="left:283px;top:845px;width:180px;height:54px;background:#fdfcf3;border:3px solid #fcf1ac;z-index:5"></div>
<svg class="abs" style="left:429px;top:837px;z-index:6" width="16" height="9"><path d="M0 9L8 .8L16 9z" fill="#fcf1ac"/></svg>
<div class="abs" style="left:238px;top:854px;width:210px;z-index:7;color:#3b404b;font-size:14px;line-height:18px;text-align:right;transform:scaleX(.8);transform-origin:100% 50%;white-space:nowrap">Drag resources on video to<br>add an annotation</div>
</body>
</html>
